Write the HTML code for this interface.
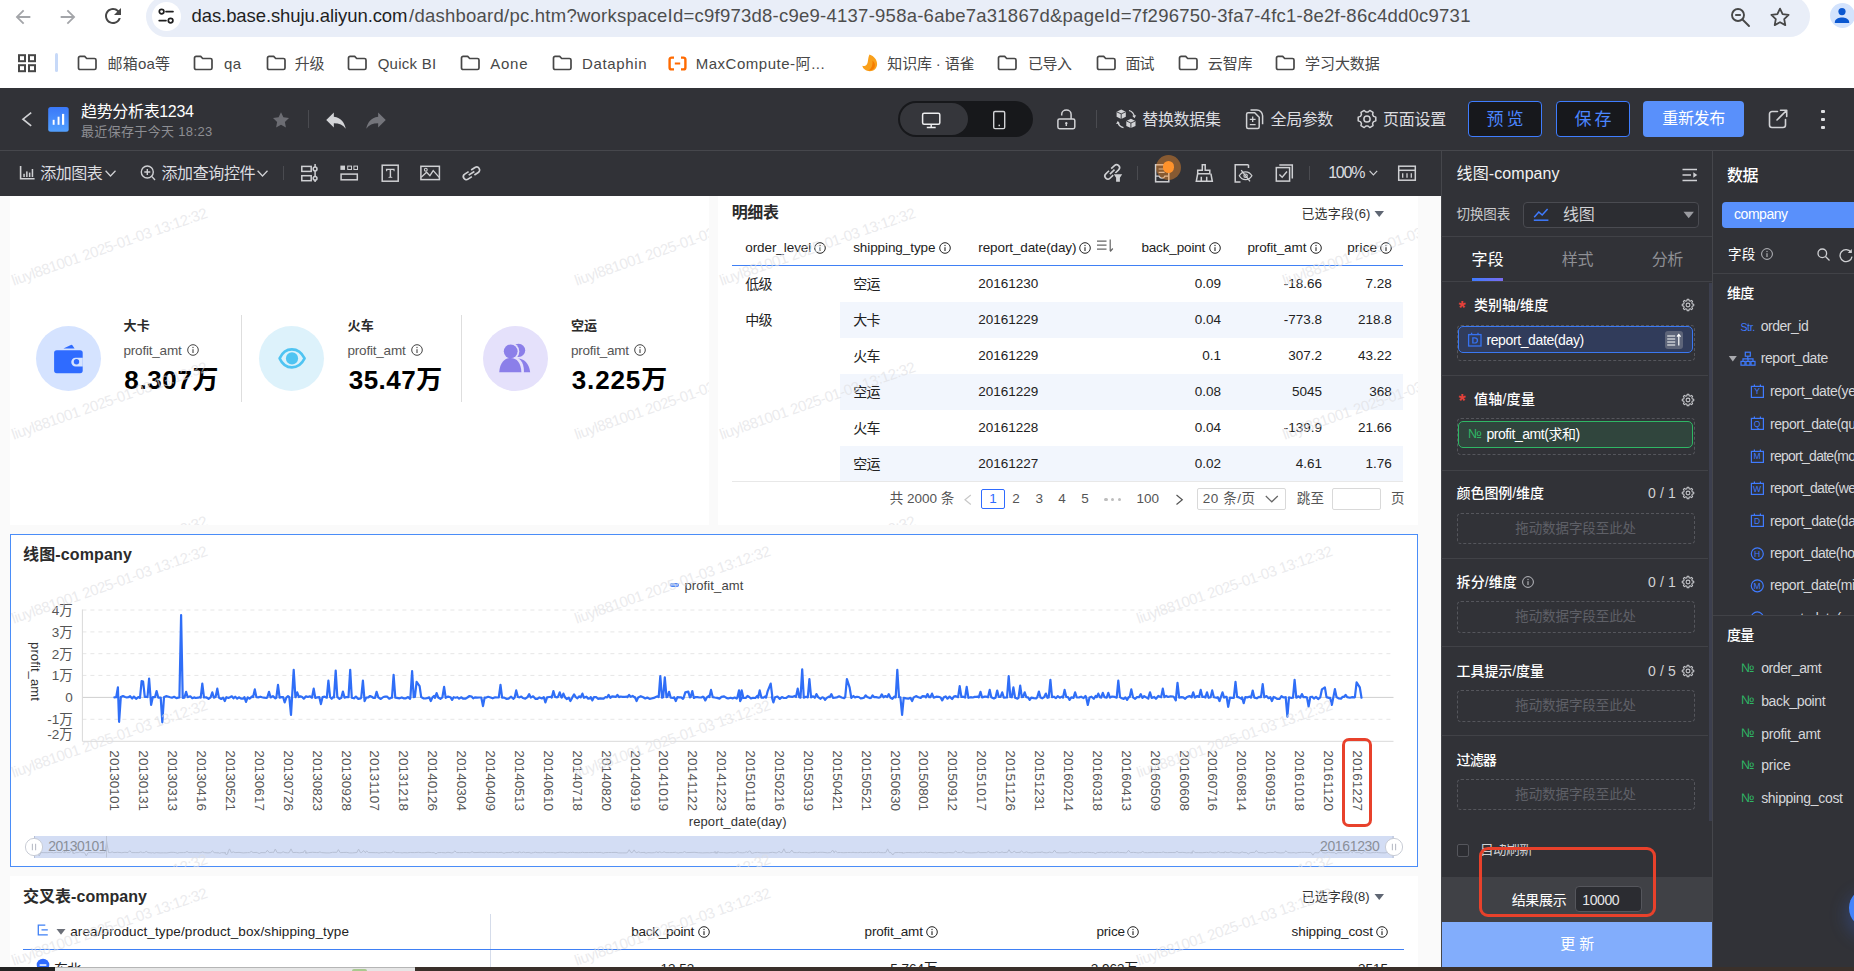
<!DOCTYPE html><html lang="zh"><head><meta charset="utf-8"><title>趋势分析表1234</title><style>
html,body{margin:0;padding:0}
body{width:1854px;height:971px;overflow:hidden;position:relative;background:#fff;font-family:"Liberation Sans","Noto Sans CJK SC",sans-serif;}
div,svg,.t{position:absolute}
svg{overflow:visible}
.t{white-space:nowrap;line-height:1}
.clip{overflow:hidden}

.wm{font-size:15px;color:rgba(222,222,226,0.62);transform:rotate(-19.4deg);transform-origin:0 50%;letter-spacing:-0.43px}

</style></head><body>
<div style="left:0px;top:0px;width:1854px;height:88px;background:#fff"></div>
<div style="left:146px;top:-4px;width:1664px;height:40.5px;background:#e9eef8;border-radius:20.5px"></div>
<div style="left:151.5px;top:1.5px;width:29px;height:29px;background:#fff;border-radius:50%"></div>
<svg style="left:11.5px;top:5.5px;" width="22" height="22" viewBox="0 0 24 24"><path d="M20 11H7.83l5.59-5.59L12 4l-8 8 8 8 1.41-1.41L7.83 13H20v-2z" fill="#a3a5a9"/></svg>
<svg style="left:56.5px;top:5.5px;" width="22" height="22" viewBox="0 0 24 24"><path d="M4 11h12.17l-5.59-5.59L12 4l8 8-8 8-1.41-1.41L16.17 13H4v-2z" fill="#a3a5a9"/></svg>
<svg style="left:100.7px;top:4px;" width="24" height="24" viewBox="0 0 24 24"><path d="M17.65 6.35A7.958 7.958 0 0 0 12 4c-4.42 0-7.99 3.58-7.99 8s3.57 8 7.99 8c3.73 0 6.84-2.55 7.73-6h-2.08A5.99 5.99 0 0 1 12 18c-3.31 0-6-2.69-6-6s2.69-6 6-6c1.66 0 3.14.69 4.22 1.78L13 11h7V4l-2.35 2.35z" fill="#474747"/></svg>
<svg style="left:156px;top:4px;" width="22" height="24" viewBox="0 0 22 24"><g fill="none" stroke="#1f1f1f" stroke-width="1.7" stroke-linecap="round"><circle cx="5.6" cy="7.6" r="2.3"/><path d="M10 7.6H17"/><path d="M3.2 16.6H10"/><circle cx="14.6" cy="16.6" r="2.3"/></g></svg>
<span class="t" style="left:191.50px;top:6.95px;font-size:18.5px;color:#1f1f1f;letter-spacing:-0.085px;">das.base.shuju.aliyun.com</span>
<span class="t" style="left:409.00px;top:6.95px;font-size:18.5px;color:#4d4d4d;letter-spacing:0.245px;">/dashboard/pc.htm?workspaceId=c9f973d8-c9e9-4137-958a-6abe7a31867d&amp;pageId=7f296750-3fa7-4fc1-8e2f-86c4dd0c9731</span>
<svg style="left:1729px;top:6px;" width="22" height="22" viewBox="0 0 22 22"><g fill="none" stroke="#474747" stroke-width="1.9"><circle cx="9" cy="9" r="6"/><path d="M13.5 13.5L20 20" stroke-linecap="round"/><path d="M6.2 9h5.6"/></g></svg>
<svg style="left:1769px;top:5.5px;" width="22" height="22" viewBox="0 0 22 22"><path d="M11 2.6l2.6 5.5 6 .8-4.4 4.2 1.1 6-5.3-2.9-5.3 2.9 1.1-6L2.4 8.9l6-.8z" fill="none" stroke="#474747" stroke-width="1.8" stroke-linejoin="round"/></svg>
<div style="left:1829.5px;top:3px;width:25px;height:25px;background:#d3e3fd;border-radius:50%"></div>
<svg style="left:1832px;top:5px;" width="20" height="20" viewBox="0 0 20 20"><circle cx="10" cy="6.6" r="3.6" fill="#0b57d0"/><path d="M2.8 17.2c0-3.4 4.4-4.7 7.2-4.7s7.2 1.3 7.2 4.7v.8H2.8z" fill="#0b57d0"/></svg>
<svg style="left:17px;top:53px;" width="20" height="20" viewBox="0 0 20 20"><g fill="none" stroke="#474747" stroke-width="2"><rect x="2" y="2.2" width="6" height="6"/><rect x="12" y="2.2" width="6" height="6"/><rect x="2" y="12.2" width="6" height="6"/><rect x="12" y="12.2" width="6" height="6"/></g></svg>
<div style="left:55px;top:53px;width:3px;height:19px;background:#c7d9f8;border-radius:1.5px"></div>
<svg style="left:77px;top:54.8px;" width="20.6" height="16" viewBox="0 0 20.6 16"><path d="M1.5 3 a1.6 1.6 0 0 1 1.6-1.6 h4.6 l2 2.1 h7.7 a1.6 1.6 0 0 1 1.6 1.6 v7.8 a1.6 1.6 0 0 1-1.6 1.6 h-14.3 a1.6 1.6 0 0 1-1.6-1.6 z" fill="none" stroke="#474747" stroke-width="1.7" stroke-linejoin="round"/></svg>
<span class="t" style="left:107.60px;top:55.70px;font-size:15px;color:#474747;letter-spacing:0.178px;">邮箱oa等</span>
<svg style="left:193.4px;top:54.8px;" width="20.6" height="16" viewBox="0 0 20.6 16"><path d="M1.5 3 a1.6 1.6 0 0 1 1.6-1.6 h4.6 l2 2.1 h7.7 a1.6 1.6 0 0 1 1.6 1.6 v7.8 a1.6 1.6 0 0 1-1.6 1.6 h-14.3 a1.6 1.6 0 0 1-1.6-1.6 z" fill="none" stroke="#474747" stroke-width="1.7" stroke-linejoin="round"/></svg>
<span class="t" style="left:224.00px;top:55.70px;font-size:15px;color:#474747;letter-spacing:0.312px;">qa</span>
<svg style="left:265.5px;top:54.8px;" width="20.6" height="16" viewBox="0 0 20.6 16"><path d="M1.5 3 a1.6 1.6 0 0 1 1.6-1.6 h4.6 l2 2.1 h7.7 a1.6 1.6 0 0 1 1.6 1.6 v7.8 a1.6 1.6 0 0 1-1.6 1.6 h-14.3 a1.6 1.6 0 0 1-1.6-1.6 z" fill="none" stroke="#474747" stroke-width="1.7" stroke-linejoin="round"/></svg>
<span class="t" style="left:294.80px;top:55.70px;font-size:15px;color:#474747;letter-spacing:-0.216px;">升级</span>
<svg style="left:347.4px;top:54.8px;" width="20.6" height="16" viewBox="0 0 20.6 16"><path d="M1.5 3 a1.6 1.6 0 0 1 1.6-1.6 h4.6 l2 2.1 h7.7 a1.6 1.6 0 0 1 1.6 1.6 v7.8 a1.6 1.6 0 0 1-1.6 1.6 h-14.3 a1.6 1.6 0 0 1-1.6-1.6 z" fill="none" stroke="#474747" stroke-width="1.7" stroke-linejoin="round"/></svg>
<span class="t" style="left:377.70px;top:55.70px;font-size:15px;color:#474747;letter-spacing:0.259px;">Quick BI</span>
<svg style="left:460px;top:54.8px;" width="20.6" height="16" viewBox="0 0 20.6 16"><path d="M1.5 3 a1.6 1.6 0 0 1 1.6-1.6 h4.6 l2 2.1 h7.7 a1.6 1.6 0 0 1 1.6 1.6 v7.8 a1.6 1.6 0 0 1-1.6 1.6 h-14.3 a1.6 1.6 0 0 1-1.6-1.6 z" fill="none" stroke="#474747" stroke-width="1.7" stroke-linejoin="round"/></svg>
<span class="t" style="left:490.30px;top:55.70px;font-size:15px;color:#474747;letter-spacing:0.718px;">Aone</span>
<svg style="left:551.8px;top:54.8px;" width="20.6" height="16" viewBox="0 0 20.6 16"><path d="M1.5 3 a1.6 1.6 0 0 1 1.6-1.6 h4.6 l2 2.1 h7.7 a1.6 1.6 0 0 1 1.6 1.6 v7.8 a1.6 1.6 0 0 1-1.6 1.6 h-14.3 a1.6 1.6 0 0 1-1.6-1.6 z" fill="none" stroke="#474747" stroke-width="1.7" stroke-linejoin="round"/></svg>
<span class="t" style="left:582.00px;top:55.70px;font-size:15px;color:#474747;letter-spacing:0.650px;">Dataphin</span>
<svg style="left:668px;top:55.5px;" width="19" height="15" viewBox="0 0 19 15"><g fill="none" stroke="#ff6a00" stroke-width="2.4" stroke-linejoin="round"><path d="M6 1.6H3.6a2 2 0 0 0-2 2v7.8a2 2 0 0 0 2 2H6"/><path d="M13 1.6h2.4a2 2 0 0 1 2 2v7.8a2 2 0 0 1-2 2H13"/><path d="M6.8 7.5h5.4" stroke-width="2"/></g></svg>
<span class="t" style="left:695.70px;top:55.70px;font-size:15px;color:#474747;letter-spacing:0.521px;">MaxCompute-阿...</span>
<svg style="left:859px;top:53px;" width="21" height="20" viewBox="0 0 21 20"><path d="M10.5 1.5c4.5 1.5 8 5.5 7.6 10.3-.3 3.8-3.4 6.4-7.2 6.4-4 0-7-2.3-7.6-5.4 1.6.6 3.3.2 4.3-1C9.600 9.400 8.500 5.500 10.500 1.500z" fill="#f9a01b"/><path d="M13.5 7.5c2.5 2 3.300 5 1.700 7.500-1.200 1.900-3.400 2.700-5.800 2.500 3-1.500 4.500-5.500 4.100-10z" fill="#f57c00"/></svg>
<span class="t" style="left:887.30px;top:55.70px;font-size:15px;color:#474747;letter-spacing:-0.149px;">知识库 · 语雀</span>
<svg style="left:997.4px;top:54.8px;" width="20.6" height="16" viewBox="0 0 20.6 16"><path d="M1.5 3 a1.6 1.6 0 0 1 1.6-1.6 h4.6 l2 2.1 h7.7 a1.6 1.6 0 0 1 1.6 1.6 v7.8 a1.6 1.6 0 0 1-1.6 1.6 h-14.3 a1.6 1.6 0 0 1-1.6-1.6 z" fill="none" stroke="#474747" stroke-width="1.7" stroke-linejoin="round"/></svg>
<span class="t" style="left:1028.00px;top:55.70px;font-size:15px;color:#474747;letter-spacing:-0.558px;">已导入</span>
<svg style="left:1095.7px;top:54.8px;" width="20.6" height="16" viewBox="0 0 20.6 16"><path d="M1.5 3 a1.6 1.6 0 0 1 1.6-1.6 h4.6 l2 2.1 h7.7 a1.6 1.6 0 0 1 1.6 1.6 v7.8 a1.6 1.6 0 0 1-1.6 1.6 h-14.3 a1.6 1.6 0 0 1-1.6-1.6 z" fill="none" stroke="#474747" stroke-width="1.7" stroke-linejoin="round"/></svg>
<span class="t" style="left:1125.50px;top:55.70px;font-size:15px;color:#474747;letter-spacing:-1.016px;">面试</span>
<svg style="left:1178px;top:54.8px;" width="20.6" height="16" viewBox="0 0 20.6 16"><path d="M1.5 3 a1.6 1.6 0 0 1 1.6-1.6 h4.6 l2 2.1 h7.7 a1.6 1.6 0 0 1 1.6 1.6 v7.8 a1.6 1.6 0 0 1-1.6 1.6 h-14.3 a1.6 1.6 0 0 1-1.6-1.6 z" fill="none" stroke="#474747" stroke-width="1.7" stroke-linejoin="round"/></svg>
<span class="t" style="left:1207.80px;top:55.70px;font-size:15px;color:#474747;letter-spacing:-0.158px;">云智库</span>
<svg style="left:1275.3px;top:54.8px;" width="20.6" height="16" viewBox="0 0 20.6 16"><path d="M1.5 3 a1.6 1.6 0 0 1 1.6-1.6 h4.6 l2 2.1 h7.7 a1.6 1.6 0 0 1 1.6 1.6 v7.8 a1.6 1.6 0 0 1-1.6 1.6 h-14.3 a1.6 1.6 0 0 1-1.6-1.6 z" fill="none" stroke="#474747" stroke-width="1.7" stroke-linejoin="round"/></svg>
<span class="t" style="left:1305.10px;top:55.70px;font-size:15px;color:#474747;letter-spacing:-0.104px;">学习大数据</span>
<div style="left:0px;top:88px;width:1854px;height:108px;background:#313237"></div>
<div style="left:0px;top:150px;width:1854px;height:1px;background:#46474c"></div>
<svg style="left:20px;top:108px;" width="16" height="22" viewBox="0 0 16 22"><path d="M11.2 4.6L3 11.2l8.200 6.700" fill="none" stroke="#d0d1d4" stroke-width="1.7"/></svg>
<svg style="left:48px;top:107px" width="21" height="25" viewBox="0 0 21 25"><defs><linearGradient id="ag" x1="0" y1="0" x2="0" y2="1"><stop offset="0" stop-color="#3a78f8"/><stop offset="1" stop-color="#52a0ff"/></linearGradient></defs><rect x="0.2" y="0" width="20.5" height="24.8" rx="2.5" fill="url(#ag)"/><rect x="4.7" y="12.8" width="1.9" height="5" fill="#fff"/><rect x="9.6" y="9.700" width="1.9" height="8.100" fill="#fff"/><rect x="14" y="6.900" width="2.2" height="10.900" fill="#fff"/></svg>
<span class="t" style="left:81.00px;top:104.40px;font-size:16px;color:#ffffff;letter-spacing:-0.339px;">趋势分析表1234</span>
<span class="t" style="left:81.00px;top:124.70px;font-size:13px;color:#8d8e93;letter-spacing:0.337px;">最近保存于今天 18:23</span>
<svg style="left:271.8px;top:110.7px;" width="18" height="18" viewBox="0 0 18 18"><path d="M9 1.2l2.400 5.100 5.600 .7-4.100 3.900 1 5.600L9 13.800 4.100 16.500l1-5.600L1 7l5.600-.7z" fill="#6c6d73"/></svg>
<div style="left:308px;top:110.3px;width:1px;height:17.5px;background:#4a4b50"></div>
<svg style="left:323px;top:106.6px;" width="26" height="26" viewBox="0 0 24 24"><path d="M10 9V5l-7 7 7 7v-4.100c5 0 8.500 1.600 11 5.100-1-5-4-10-11-11z" fill="#d4d5d8"/></svg>
<svg style="left:363px;top:106.6px;" width="26" height="26" viewBox="0 0 24 24"><path d="M14 9V5l7 7-7 7v-4.100c-5 0-8.500 1.600-11 5.100 1-5 4-10 11-11z" fill="#74757b"/></svg>
<div style="left:898px;top:101px;width:135.3px;height:35.8px;background:#17181b;border-radius:18px"></div>
<div style="left:900px;top:102.7px;width:68.2px;height:32.3px;background:#35363b;border-radius:16.2px"></div>
<svg style="left:918px;top:108px;" width="26" height="24" viewBox="0 0 26 24"><g fill="none" stroke="#ededef" stroke-width="1.5"><rect x="4.6" y="5.200" width="17.200" height="11" rx="1.5"/><path d="M13.200 16.200V19.200M8.800 19.500H17.700" /></g></svg>
<svg style="left:990px;top:108px;" width="18" height="24" viewBox="0 0 18 24"><g fill="none" stroke="#d2d3d6" stroke-width="1.4"><rect x="3.700" y="3.500" width="11" height="17.100" rx="1.3"/></g><rect x="8.500" y="16.700" width="1.500" height="1.500" fill="#d2d3d6"/></svg>
<svg style="left:1054px;top:106px;" width="24" height="26" viewBox="0 0 24 26"><g fill="none" stroke="#d2d3d6" stroke-width="1.5"><rect x="3.900" y="13" width="16.900" height="9.700" rx="1.600"/><path d="M7.700 9.500V8.200a4.700 4.200 0 0 1 9.400 0V13"/></g><path d="M12.300 16a1.300 1.300 0 0 1 .6 2.400l.2 1.700h-1.600l.2-1.700a1.300 1.300 0 0 1 .6-2.400z" fill="#d2d3d6"/></svg>
<div style="left:1096px;top:110px;width:1px;height:18px;background:#4a4b50"></div>
<svg style="left:1114px;top:107px;" width="24" height="24" viewBox="0 0 24 24"><path d="M2.6 4.800000000000001l4.600-2.200 4.600 2.200v5l-4.600 2.200-4.600-2.200z" fill="#d2d3d6"/><path d="M2.6 4.800000000000001l4.600 2.100 4.600-2.100M7.199999999999999 6.9v5.100" fill="none" stroke="#313237" stroke-width="0.9"/><path d="M12.3 13.899999999999999l4.600-2.200 4.600 2.200v5l-4.600 2.200-4.600-2.200z" fill="#d2d3d6"/><path d="M12.3 13.899999999999999l4.600 2.100 4.600-2.100M16.9 16.0v5.100" fill="none" stroke="#313237" stroke-width="0.9"/><g fill="none" stroke="#d2d3d6" stroke-width="1.300"><path d="M15 3.500a7.500 7.500 0 0 1 5.300 6.500"/><path d="M9.500 20.700a7.500 7.500 0 0 1-5.600-5.700"/></g><path d="M18.200 8.700l2.300 2.500 1.600-3z" fill="#d2d3d6"/><path d="M6 16.500l-2.300-2.600-1.600 3z" fill="#d2d3d6"/></svg>
<span class="t" style="left:1142.20px;top:111.50px;font-size:16px;color:#dcdde0;letter-spacing:-0.304px;">替换数据集</span>
<svg style="left:1243px;top:107px;" width="24" height="24" viewBox="0 0 24 24"><g fill="none" stroke="#d2d3d6" stroke-width="1.500"><path d="M3.600 7.200a1.500 1.500 0 0 1 1.500-1.500h6.600l4.500 4.500v9.800a1.500 1.500 0 0 1-1.500 1.500H5.100a1.500 1.500 0 0 1-1.500-1.500z"/><path d="M7.500 3h6.300a5.800 5.800 0 0 1 5.800 5.800v8.400"/><path d="M6.800 12.300h5.800M9.700 9.500v5.600M6.800 17.700h5.800" stroke-width="1.300"/></g></svg>
<span class="t" style="left:1270.60px;top:111.50px;font-size:16px;color:#dcdde0;letter-spacing:-0.439px;">全局参数</span>
<svg style="left:1355.4px;top:106.9px;" width="24" height="24" viewBox="0 0 24 24"><g fill="none" stroke="#d2d3d6" stroke-width="1.500" stroke-linejoin="round"><path d="M18.60 9.39 L20.80 10.13 L20.80 13.87 L18.60 14.61 L17.56 16.41 L18.02 18.69 L14.78 20.56 L13.04 19.02 L10.96 19.02 L9.22 20.56 L5.98 18.69 L6.44 16.41 L5.40 14.61 L3.20 13.87 L3.20 10.13 L5.40 9.39 L6.44 7.59 L5.98 5.31 L9.22 3.44 L10.96 4.98 L13.04 4.98 L14.78 3.44 L18.02 5.31 L17.56 7.59Z"/><circle cx="12" cy="12" r="3.100"/></g></svg>
<span class="t" style="left:1383.10px;top:111.50px;font-size:16px;color:#dcdde0;letter-spacing:-0.305px;">页面设置</span>
<div style="left:1467.8px;top:101.4px;width:74.2px;height:35.3px;box-sizing:border-box;background:#17181c;border:1.5px solid #3f7dff;border-radius:4px"></div>
<span class="t" style="left:1486.60px;top:110.50px;font-size:17px;color:#4b86ff;letter-spacing:-0.867px;">预 览</span>
<div style="left:1556.3px;top:101.4px;width:73.7px;height:35.3px;box-sizing:border-box;background:#17181c;border:1.5px solid #3f7dff;border-radius:4px"></div>
<span class="t" style="left:1574.50px;top:110.50px;font-size:17px;color:#4b86ff;letter-spacing:-0.867px;">保 存</span>
<div style="left:1643.1px;top:101.4px;width:101.1px;height:35.3px;background:#5990fb;border-radius:4px"></div>
<span class="t" style="left:1662.30px;top:111.20px;font-size:16px;color:#ffffff;letter-spacing:-0.339px;">重新发布</span>
<svg style="left:1766px;top:107px;" width="24" height="24" viewBox="0 0 24 24"><g fill="none" stroke="#d2d3d6" stroke-width="1.600" stroke-linecap="round" stroke-linejoin="round"><path d="M11.500 4.500H6a2.500 2.500 0 0 0-2.500 2.500v11A2.500 2.500 0 0 0 6 20.500h11a2.500 2.500 0 0 0 2.500-2.500v-5.500"/><path d="M11 13L20.500 3.500M14.500 3.300h6.200v6.200"/></g></svg>
<div style="left:1821.4px;top:109.69999999999999px;width:3.8px;height:3.8px;background:#dfe0e3;border-radius:1px"></div>
<div style="left:1821.4px;top:117.69999999999999px;width:3.8px;height:3.8px;background:#dfe0e3;border-radius:1px"></div>
<div style="left:1821.4px;top:125.5px;width:3.8px;height:3.8px;background:#dfe0e3;border-radius:1px"></div>
<svg style="left:19px;top:164px;" width="18" height="18" viewBox="0 0 18 18"><g fill="none" stroke="#cfd0d3" stroke-width="1.6"><path d="M1.600 2V14.800H15.600"/></g><g fill="#cfd0d3"><rect x="4.300" y="9.800" width="1.500" height="3.200"/><rect x="7.100" y="7.400" width="1.500" height="5.600"/><rect x="9.900" y="8.600" width="1.500" height="4.400"/><rect x="12.700" y="5" width="1.500" height="8"/></g></svg>
<span class="t" style="left:40.20px;top:166.00px;font-size:16px;color:#dcdde0;letter-spacing:-0.439px;">添加图表</span>
<svg style="left:104.5px;top:169.5px;" width="12" height="8" viewBox="0 0 12 8"><g fill="none" stroke="#cfd0d3" stroke-width="1.3"><path d="M0.600 0.800L5.500 6l5-5.200"/></g></svg>
<svg style="left:139px;top:164px;" width="18" height="18" viewBox="0 0 18 18"><g fill="none" stroke="#cfd0d3" stroke-width="1.4"><circle cx="8.300" cy="8" r="6"/><path d="M12.700 12.400L16 16M5.300 8h6M8.300 5v6"/></g></svg>
<span class="t" style="left:161.50px;top:166.00px;font-size:16px;color:#dcdde0;letter-spacing:-0.403px;">添加查询控件</span>
<svg style="left:257.3px;top:169.5px;" width="12" height="8" viewBox="0 0 12 8"><g fill="none" stroke="#cfd0d3" stroke-width="1.3"><path d="M0.600 0.800L5.500 6l5-5.200"/></g></svg>
<div style="left:283px;top:166.4px;width:1px;height:13.3px;background:#4a4b50"></div>
<svg style="left:299px;top:162px;" width="20" height="22" viewBox="0 0 20 22"><g fill="none" stroke="#cfd0d3" stroke-width="1.5"><rect x="2.800" y="4.400" width="9.400" height="5"/><rect x="2.800" y="13.700" width="9.400" height="5"/><path d="M16.100 2V5M16.100 9V14.300M16.100 18.300V20"/><circle cx="16.100" cy="7" r="1.900"/><circle cx="16.100" cy="16.300" r="1.900"/></g></svg>
<svg style="left:338px;top:162px;" width="22" height="22" viewBox="0 0 22 22"><rect x="2.400" y="3.600" width="4.600" height="4.300" fill="#cfd0d3"/><g fill="none" stroke="#cfd0d3" stroke-width="1"><rect x="9.700" y="4.100" width="3.800" height="3.400"/><rect x="15.900" y="4.100" width="3.600" height="3.400"/></g><g fill="none" stroke="#cfd0d3" stroke-width="1.5"><rect x="3.100" y="12.100" width="16.200" height="5.700"/></g></svg>
<svg style="left:379px;top:162px;" width="22" height="22" viewBox="0 0 22 22"><g fill="none" stroke="#cfd0d3" stroke-width="1.5"><rect x="3.200" y="3.200" width="16" height="16"/></g><path d="M6.800 6.800h8.800v2.500h-0.900l-0.300-1.200h-2.300v6.600l1.200 0.200v0.900h-3.800v-0.900l1.200-0.200v-6.600h-2.300l-0.300 1.200h-0.900z" fill="#cfd0d3"/></svg>
<svg style="left:418px;top:162px;" width="24" height="22" viewBox="0 0 24 22"><g fill="none" stroke="#cfd0d3" stroke-width="1.5"><rect x="2.900" y="4.300" width="18.500" height="13.300"/><circle cx="7.800" cy="7.700" r="1.400" stroke-width="1.100"/><path d="M3.200 15.200L8.600 10.200l3.300 3.400 3.300-5 6 6.800" stroke-width="1.300"/></g></svg>
<svg style="left:460px;top:162px;" width="22" height="22" viewBox="0 0 22 22"><g transform="translate(11.500,11.300) rotate(-33)" fill="none" stroke="#cfd0d3" stroke-width="1.700"><path d="M-1.5 -3H-6.1a3 3 0 0 0 0 6H-1.5"/><path d="M1.5 -3H6.1a3 3 0 0 1 0 6H1.5"/><path d="M-3.4 0H3.4"/></g></svg>
<svg style="left:1102px;top:162px;" width="22" height="22" viewBox="0 0 22 22"><g transform="translate(10.200,9.900) rotate(-44)" fill="none" stroke="#cfd0d3" stroke-width="1.600"><path d="M-1.5 -3H-6a3 3 0 0 0 0 6H-1.5"/><path d="M1.5 -3H6a3 3 0 0 1 0 6H1.5"/><path d="M-3.2 0H3.2"/></g><path d="M10.800 11.500h10.400l-3 5v4h-4.400v-4z" fill="#313237"/><path d="M11.800 12.200h8.400l-2.300 3.600v3.900h-3.800v-3.900z" fill="#cfd0d3"/></svg>
<div style="left:1137px;top:166.2px;width:1px;height:13.5px;background:#4a4b50"></div>
<svg style="left:1153px;top:162px;" width="20" height="22" viewBox="0 0 20 22"><g fill="none" stroke="#cfd0d3" stroke-width="1.5"><rect x="2.600" y="2.800" width="13.200" height="17"/><path d="M5.600 7h6M5.600 10.300h6" stroke-width="1.200"/><path d="M2.800 14.200h3.400c.8 2.600 4.600 2.600 5.600 0h3.800" stroke-width="1.300"/></g></svg>
<div style="left:1155.9px;top:154.8px;width:25px;height:25px;background:rgba(255,146,43,0.42);border-radius:50%"></div>
<div style="left:1162.5px;top:161.4px;width:11.8px;height:11.8px;background:#ff922b;border-radius:50%"></div>
<svg style="left:1193px;top:162px;" width="22" height="22" viewBox="0 0 22 22"><g fill="none" stroke="#cfd0d3" stroke-width="1.5"><path d="M9.300 2.800h2.900v5.400h4.600v3.500H4.700V8.200h4.600z"/><path d="M4.700 11.700L3.300 19.300h16l-1.400-7.600M8.300 19.300v-4.600M13.700 19.300v-4.600"/></g></svg>
<svg style="left:1232px;top:162px;" width="22" height="22" viewBox="0 0 22 22"><g fill="none" stroke="#cfd0d3" stroke-width="1.5"><path d="M16.500 2.800H3.200v17.200h5.300M16.500 2.800v3.200"/><path d="M7.300 13.700c3-5.200 9.600-5.200 12.600 0-3 5.200-9.600 5.200-12.600 0z" stroke-width="1.300"/><circle cx="13.600" cy="13.700" r="1.700" stroke-width="1.200"/><path d="M9.200 8.200L18 19.300" stroke-width="1.300"/></g></svg>
<svg style="left:1273px;top:162px;" width="22" height="22" viewBox="0 0 22 22"><g fill="none" stroke="#cfd0d3" stroke-width="1.5"><rect x="3.300" y="5.600" width="13.300" height="13.500"/><path d="M6.300 3h13v13.400" /><path d="M6.400 12.500l2.800 2.800 4.800-5.800" stroke-width="1.400"/></g></svg>
<div style="left:1309px;top:166.2px;width:1px;height:13.5px;background:#4a4b50"></div>
<span class="t" style="left:1328.20px;top:164.60px;font-size:16px;color:#dcdde0;letter-spacing:-1.241px;">100%</span>
<svg style="left:1369.3px;top:169.7px;" width="10" height="7" viewBox="0 0 10 7"><g fill="none" stroke="#cfd0d3" stroke-width="1.2"><path d="M0.600 0.800L4.400 4.800l3.800-4"/></g></svg>
<svg style="left:1396px;top:162px;" width="22" height="22" viewBox="0 0 22 22"><g fill="none" stroke="#cfd0d3" stroke-width="1.5"><rect x="2.700" y="4.200" width="16.600" height="14"/><path d="M2.700 8.300h16.600"/><path d="M6.700 11.300v4.500M11 11.300v4.500M15.300 11.300v4.500" stroke-width="1.300"/></g></svg>
<div style="left:0px;top:196px;width:1441px;height:775px;background:#fafafa"></div>
<div style="left:10px;top:196px;width:699px;height:329px;background:#fff"></div>
<div style="left:718px;top:196px;width:700px;height:329px;background:#fff"></div>
<div style="left:10px;top:534px;width:1408px;height:333px;background:#fff;box-sizing:border-box;border:1px solid #4a8df8"></div>
<div style="left:10px;top:876px;width:1408px;height:100px;background:#fff"></div>
<div style="left:35.5px;top:325.8px;width:65px;height:65px;background:#d5e3ff;border-radius:50%"></div>
<svg style="left:50px;top:342px;" width="36" height="34" viewBox="0 0 36 34"><path d="M13.400 6.400L20.900 2.900a1.200 1.200 0 0 1 1.500 .4l2.200 3.100z" fill="#2f6bff"/><rect x="4.100" y="8.200" width="28.600" height="23" rx="2.600" fill="#2f6bff"/><path d="M25.600 15.700h7.200v8.700h-7.200a4.350 4.350 0 0 1 0-8.700z" fill="#d5e3ff"/><circle cx="26.500" cy="19.800" r="2.700" fill="#2f6bff"/></svg>
<span class="t" style="left:123.50px;top:319.20px;font-size:13px;color:#2b2b2b;letter-spacing:0.284px;font-weight:700;">大卡</span>
<span class="t" style="left:123.50px;top:343.55px;font-size:13.5px;color:#555;letter-spacing:-0.203px;">profit_amt</span>
<svg style="left:186px;top:343.2px;" width="14" height="14" viewBox="0 0 14 14"><circle cx="7" cy="7" r="5.3" fill="none" stroke="#444" stroke-width="1"/><rect x="6.45" y="6.200" width="1.100" height="3.800" fill="#444"/><rect x="6.45" y="3.900" width="1.100" height="1.200" fill="#444"/></svg>
<span class="t" style="left:124.30px;top:367.00px;font-size:26px;color:#000;letter-spacing:0.644px;font-weight:700;">8.307万</span>
<div style="left:241px;top:315.4px;width:1.3px;height:86.6px;background:#dedede"></div>
<div style="left:259px;top:325.8px;width:65px;height:65px;background:#ddf2fb;border-radius:50%"></div>
<svg style="left:276px;top:346px;" width="32" height="26" viewBox="0 0 32 26"><path d="M3.600 12.400C9 0.400 22.600 0.400 28.600 12.400 22.600 24.400 9 24.400 3.600 12.400z" fill="none" stroke="#4fc4f2" stroke-width="2.600" stroke-linejoin="round"/><circle cx="16" cy="12.400" r="6.100" fill="#4fc4f2"/></svg>
<span class="t" style="left:347.50px;top:319.20px;font-size:13px;color:#2b2b2b;letter-spacing:0.184px;font-weight:700;">火车</span>
<span class="t" style="left:347.50px;top:343.55px;font-size:13.5px;color:#555;letter-spacing:-0.203px;">profit_amt</span>
<svg style="left:409.8px;top:343.2px;" width="14" height="14" viewBox="0 0 14 14"><circle cx="7" cy="7" r="5.3" fill="none" stroke="#444" stroke-width="1"/><rect x="6.45" y="6.200" width="1.100" height="3.800" fill="#444"/><rect x="6.45" y="3.900" width="1.100" height="1.200" fill="#444"/></svg>
<span class="t" style="left:348.70px;top:367.00px;font-size:26px;color:#000;letter-spacing:0.504px;font-weight:700;">35.47万</span>
<div style="left:460.5px;top:315.4px;width:1.3px;height:86.6px;background:#dedede"></div>
<div style="left:483px;top:325.8px;width:65px;height:65px;background:#e5e1fb;border-radius:50%"></div>
<svg style="left:497px;top:341px;" width="36" height="34" viewBox="0 0 36 34"><circle cx="21.600" cy="9.300" r="6.600" fill="#8b7fe9"/><path d="M21 17.500c6 .3 11 4.600 12.200 13.700H21z" fill="#8b7fe9"/><circle cx="13.600" cy="10.400" r="8.700" fill="#e5e1fb"/><path d="M0 32.700c0-13 6-17.500 14.400-17.500 8.400 0 13.400 6.500 12.400 17.500z" fill="#e5e1fb"/><circle cx="13.700" cy="10.300" r="6.900" fill="#8b7fe9"/><path d="M2.200 31.200c.8-9.800 5.300-14.200 11.500-14.200 6.200 0 10.400 5.200 10.700 14.200z" fill="#8b7fe9"/></svg>
<span class="t" style="left:570.90px;top:319.20px;font-size:13px;color:#2b2b2b;letter-spacing:0.184px;font-weight:700;">空运</span>
<span class="t" style="left:570.90px;top:343.55px;font-size:13.5px;color:#555;letter-spacing:-0.203px;">profit_amt</span>
<svg style="left:633.2px;top:343.2px;" width="14" height="14" viewBox="0 0 14 14"><circle cx="7" cy="7" r="5.3" fill="none" stroke="#444" stroke-width="1"/><rect x="6.45" y="6.200" width="1.100" height="3.800" fill="#444"/><rect x="6.45" y="3.900" width="1.100" height="1.200" fill="#444"/></svg>
<span class="t" style="left:571.70px;top:367.00px;font-size:26px;color:#000;letter-spacing:0.884px;font-weight:700;">3.225万</span>
<span class="t" style="left:731.70px;top:205.00px;font-size:16px;color:#2b2b2b;letter-spacing:-0.358px;font-weight:700;">明细表</span>
<span class="t" style="left:1301.40px;top:206.80px;font-size:13px;color:#333;letter-spacing:0.185px;">已选字段(6)</span>
<svg style="left:1374px;top:209.5px;" width="11" height="8" viewBox="0 0 11 8"><path d="M0.500 1h9.500L5.250 7z" fill="#5f6673"/></svg>
<span class="t" style="left:745.20px;top:241.05px;font-size:13.5px;color:#222;letter-spacing:-0.070px;">order_level</span>
<svg style="left:812.8px;top:240.8px;" width="14" height="14" viewBox="0 0 14 14"><circle cx="7" cy="7" r="5.3" fill="none" stroke="#222" stroke-width="1"/><rect x="6.45" y="6.200" width="1.100" height="3.800" fill="#222"/><rect x="6.45" y="3.900" width="1.100" height="1.200" fill="#222"/></svg>
<span class="t" style="left:853.20px;top:241.05px;font-size:13.5px;color:#222;letter-spacing:-0.086px;">shipping_type</span>
<svg style="left:937.8px;top:240.8px;" width="14" height="14" viewBox="0 0 14 14"><circle cx="7" cy="7" r="5.3" fill="none" stroke="#222" stroke-width="1"/><rect x="6.45" y="6.200" width="1.100" height="3.800" fill="#222"/><rect x="6.45" y="3.900" width="1.100" height="1.200" fill="#222"/></svg>
<span class="t" style="left:978.30px;top:241.05px;font-size:13.5px;color:#222;letter-spacing:-0.107px;">report_date(day)</span>
<svg style="left:1078px;top:240.8px;" width="14" height="14" viewBox="0 0 14 14"><circle cx="7" cy="7" r="5.3" fill="none" stroke="#222" stroke-width="1"/><rect x="6.45" y="6.200" width="1.100" height="3.800" fill="#222"/><rect x="6.45" y="3.900" width="1.100" height="1.200" fill="#222"/></svg>
<span class="t" style="left:1141.40px;top:241.05px;font-size:13.5px;color:#222;letter-spacing:-0.146px;">back_point</span>
<svg style="left:1207.7px;top:240.8px;" width="14" height="14" viewBox="0 0 14 14"><circle cx="7" cy="7" r="5.3" fill="none" stroke="#222" stroke-width="1"/><rect x="6.45" y="6.200" width="1.100" height="3.800" fill="#222"/><rect x="6.45" y="3.900" width="1.100" height="1.200" fill="#222"/></svg>
<span class="t" style="left:1247.40px;top:241.05px;font-size:13.5px;color:#222;letter-spacing:-0.115px;">profit_amt</span>
<svg style="left:1308.7px;top:240.8px;" width="14" height="14" viewBox="0 0 14 14"><circle cx="7" cy="7" r="5.3" fill="none" stroke="#222" stroke-width="1"/><rect x="6.45" y="6.200" width="1.100" height="3.800" fill="#222"/><rect x="6.45" y="3.900" width="1.100" height="1.200" fill="#222"/></svg>
<span class="t" style="left:1347.20px;top:241.05px;font-size:13.5px;color:#222;letter-spacing:0.159px;">price</span>
<svg style="left:1378.6px;top:240.8px;" width="14" height="14" viewBox="0 0 14 14"><circle cx="7" cy="7" r="5.3" fill="none" stroke="#222" stroke-width="1"/><rect x="6.45" y="6.200" width="1.100" height="3.800" fill="#222"/><rect x="6.45" y="3.900" width="1.100" height="1.200" fill="#222"/></svg>
<svg style="left:1096px;top:238px;" width="18" height="16" viewBox="0 0 18 16"><g fill="none" stroke="#666" stroke-width="1.200"><path d="M1 3.200h9.500M1 7.200h9.500M1 11.200h9.500M14.200 1.500v11.500M14.200 13.500l2.600-3"/></g></svg>
<div style="left:839.6px;top:302px;width:563.1px;height:36px;background:#f2f6fd"></div>
<div style="left:839.6px;top:374px;width:563.1px;height:36px;background:#f2f6fd"></div>
<div style="left:839.6px;top:446px;width:563.1px;height:36px;background:#f2f6fd"></div>
<div style="left:731.7px;top:265.2px;width:671px;height:1.3px;background:#3f80f5"></div>
<span class="t" style="left:745.20px;top:277.20px;font-size:14px;color:#222;letter-spacing:-0.800px;">低级</span>
<span class="t" style="left:853.20px;top:277.20px;font-size:14px;color:#222;letter-spacing:-0.800px;">空运</span>
<span class="t" style="left:978.30px;top:277.45px;font-size:13.5px;color:#222;letter-spacing:0.003px;">20161230</span>
<span class="t" style="left:1194.72px;top:277.45px;font-size:13.5px;color:#222;">0.09</span>
<span class="t" style="left:1283.72px;top:277.45px;font-size:13.5px;color:#222;">-18.66</span>
<span class="t" style="left:1365.52px;top:277.45px;font-size:13.5px;color:#222;">7.28</span>
<span class="t" style="left:745.20px;top:313.20px;font-size:14px;color:#222;letter-spacing:-0.800px;">中级</span>
<span class="t" style="left:853.20px;top:313.20px;font-size:14px;color:#222;letter-spacing:-0.800px;">大卡</span>
<span class="t" style="left:978.30px;top:313.45px;font-size:13.5px;color:#222;letter-spacing:0.003px;">20161229</span>
<span class="t" style="left:1194.72px;top:313.45px;font-size:13.5px;color:#222;">0.04</span>
<span class="t" style="left:1283.72px;top:313.45px;font-size:13.5px;color:#222;">-773.8</span>
<span class="t" style="left:1358.00px;top:313.45px;font-size:13.5px;color:#222;">218.8</span>
<span class="t" style="left:853.20px;top:349.20px;font-size:14px;color:#222;letter-spacing:-0.800px;">火车</span>
<span class="t" style="left:978.30px;top:349.45px;font-size:13.5px;color:#222;letter-spacing:0.003px;">20161229</span>
<span class="t" style="left:1202.22px;top:349.45px;font-size:13.5px;color:#222;">0.1</span>
<span class="t" style="left:1288.20px;top:349.45px;font-size:13.5px;color:#222;">307.2</span>
<span class="t" style="left:1358.00px;top:349.45px;font-size:13.5px;color:#222;">43.22</span>
<span class="t" style="left:853.20px;top:385.20px;font-size:14px;color:#222;letter-spacing:-0.800px;">空运</span>
<span class="t" style="left:978.30px;top:385.45px;font-size:13.5px;color:#222;letter-spacing:0.003px;">20161229</span>
<span class="t" style="left:1194.72px;top:385.45px;font-size:13.5px;color:#222;">0.08</span>
<span class="t" style="left:1291.95px;top:385.45px;font-size:13.5px;color:#222;">5045</span>
<span class="t" style="left:1369.27px;top:385.45px;font-size:13.5px;color:#222;">368</span>
<span class="t" style="left:853.20px;top:421.20px;font-size:14px;color:#222;letter-spacing:-0.800px;">火车</span>
<span class="t" style="left:978.30px;top:421.45px;font-size:13.5px;color:#222;letter-spacing:0.003px;">20161228</span>
<span class="t" style="left:1194.72px;top:421.45px;font-size:13.5px;color:#222;">0.04</span>
<span class="t" style="left:1283.72px;top:421.45px;font-size:13.5px;color:#222;">-139.9</span>
<span class="t" style="left:1358.00px;top:421.45px;font-size:13.5px;color:#222;">21.66</span>
<span class="t" style="left:853.20px;top:457.20px;font-size:14px;color:#222;letter-spacing:-0.800px;">空运</span>
<span class="t" style="left:978.30px;top:457.45px;font-size:13.5px;color:#222;letter-spacing:0.003px;">20161227</span>
<span class="t" style="left:1194.72px;top:457.45px;font-size:13.5px;color:#222;">0.02</span>
<span class="t" style="left:1295.72px;top:457.45px;font-size:13.5px;color:#222;">4.61</span>
<span class="t" style="left:1365.52px;top:457.45px;font-size:13.5px;color:#222;">1.76</span>
<div style="left:731.7px;top:481px;width:671px;height:1px;background:#e8e8e8"></div>
<span class="t" style="left:889.70px;top:492.25px;font-size:13.5px;color:#555;letter-spacing:-0.007px;">共 2000 条</span>
<svg style="left:963px;top:493.5px;" width="10" height="12" viewBox="0 0 10 12"><path d="M7.800 1L2 5.700l5.800 4.800" fill="none" stroke="#c8c8c8" stroke-width="1.200"/></svg>
<div style="left:981.4px;top:489.4px;width:23.3px;height:19.4px;box-sizing:border-box;border:1px solid #2f6bff;border-radius:2px;background:#fff"></div>
<span class="t" style="left:989.24px;top:492.25px;font-size:13.5px;color:#2f6bff;">1</span>
<span class="t" style="left:1012.34px;top:492.25px;font-size:13.5px;color:#555;">2</span>
<span class="t" style="left:1035.44px;top:492.25px;font-size:13.5px;color:#555;">3</span>
<span class="t" style="left:1058.34px;top:492.25px;font-size:13.5px;color:#555;">4</span>
<span class="t" style="left:1081.24px;top:492.25px;font-size:13.5px;color:#555;">5</span>
<div style="left:1104.4px;top:497.6px;width:3.2px;height:3.2px;background:#bdbdbd;border-radius:50%"></div>
<div style="left:1111.2px;top:497.6px;width:3.2px;height:3.2px;background:#bdbdbd;border-radius:50%"></div>
<div style="left:1118.0px;top:497.6px;width:3.2px;height:3.2px;background:#bdbdbd;border-radius:50%"></div>
<span class="t" style="left:1136.43px;top:492.25px;font-size:13.5px;color:#555;">100</span>
<svg style="left:1174.5px;top:493.5px;" width="10" height="12" viewBox="0 0 10 12"><path d="M1.500 1l5.800 4.700L1.500 10.500" fill="none" stroke="#555" stroke-width="1.200"/></svg>
<div style="left:1196.5px;top:488.2px;width:89.7px;height:21.4px;box-sizing:border-box;border:1px solid #d9d9d9;border-radius:2px;background:#fff"></div>
<span class="t" style="left:1202.70px;top:492.25px;font-size:13.5px;color:#555;letter-spacing:0.574px;">20 条/页</span>
<svg style="left:1265px;top:494.5px;" width="14" height="9" viewBox="0 0 14 9"><path d="M0.800 1l6 5.800 6-5.800" fill="none" stroke="#666" stroke-width="1.200"/></svg>
<span class="t" style="left:1296.70px;top:492.25px;font-size:13.5px;color:#555;letter-spacing:0.200px;">跳至</span>
<div style="left:1332.4px;top:488.2px;width:49px;height:21.4px;box-sizing:border-box;border:1px solid #d9d9d9;border-radius:2px;background:#fff"></div>
<span class="t" style="left:1391.00px;top:492.25px;font-size:13.5px;color:#555;">页</span>
<span class="t" style="left:23.00px;top:547.20px;font-size:16px;color:#2b2b2b;letter-spacing:0.136px;font-weight:700;">线图-company</span>
<div style="left:670.3px;top:583.3px;width:8.6px;height:3.4px;background:#8fb3fb;border:0.600px solid #4a83f7;box-sizing:border-box;border-radius:1.500px"></div>
<span class="t" style="left:684.50px;top:578.90px;font-size:13px;color:#444;letter-spacing:0.110px;">profit_amt</span>
<span class="t" style="left:51.68px;top:603.85px;font-size:13.5px;color:#555;">4万</span>
<span class="t" style="left:51.68px;top:625.75px;font-size:13.5px;color:#555;">3万</span>
<span class="t" style="left:51.68px;top:647.55px;font-size:13.5px;color:#555;">2万</span>
<span class="t" style="left:51.68px;top:669.25px;font-size:13.5px;color:#555;">1万</span>
<span class="t" style="left:65.18px;top:691.25px;font-size:13.5px;color:#555;">0</span>
<span class="t" style="left:47.18px;top:712.55px;font-size:13.5px;color:#555;">-1万</span>
<span class="t" style="left:47.18px;top:728.05px;font-size:13.5px;color:#555;">-2万</span>
<span class="t" style="left:5.80px;top:665.30px;font-size:13px;color:#333;letter-spacing:0.110px;transform:rotate(90deg);">profit_amt</span>
<svg style="left:0px;top:0px;" width="1441" height="971" viewBox="0 0 1441 971"><path d="M82.400 610H1393.500" stroke="#e6e6e6" stroke-width="1" stroke-dasharray="4 4"/><path d="M82.400 631.9H1393.500" stroke="#e6e6e6" stroke-width="1" stroke-dasharray="4 4"/><path d="M82.400 653.7H1393.500" stroke="#e6e6e6" stroke-width="1" stroke-dasharray="4 4"/><path d="M82.400 675.4H1393.500" stroke="#e6e6e6" stroke-width="1" stroke-dasharray="4 4"/><path d="M82.400 719.3H1393.500" stroke="#e6e6e6" stroke-width="1" stroke-dasharray="4 4"/><path d="M82.400 697.4H1393.500" stroke="#cfcfcf" stroke-width="1"/><path d="M82.400 609.500V741.300H1393.500" fill="none" stroke="#d9d9d9" stroke-width="1"/><path d="M114.4 697.4 L116.2 697.2 L117.9 687.4 L119.1 721.8 L120.8 697.1 L123.0 696.1 L125.2 697.0 L126.8 697.5 L128.5 697.2 L130.1 696.2 L132.2 698.5 L133.9 696.6 L136.1 698.8 L138.3 697.1 L140.0 697.9 L141.6 681.1 L143.1 681.6 L144.8 696.9 L147.2 696.8 L147.5 697.0 L149.1 678.6 L151.1 704.9 L152.8 697.0 L155.0 697.2 L156.6 691.1 L158.3 697.7 L160.0 697.7 L160.7 697.5 L162.3 722.3 L164.0 697.3 L166.1 696.1 L167.8 696.5 L170.1 697.2 L172.0 697.7 L174.1 696.8 L176.4 698.1 L178.3 697.7 L179.4 697.4 L181.1 615.0 L182.7 697.8 L184.4 697.6 L186.1 691.9 L187.7 697.2 L190.3 696.3 L192.3 698.2 L194.1 697.4 L195.7 698.0 L198.1 697.7 L200.6 696.9 L200.7 697.6 L202.3 683.6 L204.0 697.5 L206.1 697.3 L208.6 698.8 L210.6 697.4 L212.3 692.4 L213.9 697.6 L215.6 697.0 L217.3 688.6 L218.9 697.6 L221.2 699.0 L223.1 697.7 L224.8 701.1 L226.4 697.2 L228.4 698.0 L230.0 697.3 L231.8 696.3 L233.5 698.3 L235.2 696.7 L237.2 698.6 L238.9 697.3 L241.0 698.6 L243.4 698.6 L244.4 697.2 L246.0 701.9 L247.7 697.3 L249.6 698.6 L252.2 696.4 L253.1 697.1 L254.8 689.4 L256.4 697.1 L258.2 697.4 L260.4 696.7 L262.0 697.2 L264.0 697.7 L266.6 698.0 L267.3 697.4 L269.0 691.9 L270.6 697.5 L272.9 696.1 L275.4 698.3 L276.3 697.8 L278.0 684.9 L279.6 697.7 L281.6 697.1 L283.1 697.0 L284.7 702.4 L286.4 697.5 L288.0 696.1 L289.3 697.1 L291.0 714.9 L293.7 669.9 L295.4 697.1 L295.6 697.2 L297.2 692.4 L298.9 697.0 L300.5 696.4 L302.2 697.0 L303.8 698.6 L306.0 696.4 L307.9 697.0 L309.8 696.3 L312.0 697.7 L313.7 688.6 L315.3 697.9 L317.4 697.4 L319.3 697.0 L320.9 704.1 L322.6 697.0 L324.5 696.7 L326.8 697.7 L328.4 680.6 L330.1 697.1 L331.7 698.8 L333.8 696.4 L334.0 697.4 L335.7 670.6 L337.3 696.9 L339.5 698.9 L341.3 697.8 L342.9 691.6 L344.6 697.6 L346.4 697.0 L348.5 697.1 L350.2 669.9 L351.8 697.7 L353.9 698.3 L355.9 696.6 L358.3 699.0 L360.7 698.4 L361.2 697.7 L362.9 680.6 L364.6 701.1 L366.3 697.6 L368.1 697.5 L370.1 696.0 L371.7 696.8 L373.6 698.0 L375.0 697.9 L376.6 691.9 L378.3 697.3 L380.8 699.0 L383.4 697.0 L385.2 696.6 L387.0 696.5 L389.2 698.7 L391.7 697.4 L392.0 697.6 L393.6 674.9 L395.3 697.7 L397.0 697.9 L399.5 698.3 L401.8 697.4 L403.6 698.3 L405.5 698.4 L408.1 697.1 L410.1 698.8 L410.4 697.6 L412.1 671.1 L413.7 697.1 L414.9 697.0 L416.6 681.9 L419.6 686.1 L421.2 697.1 L423.7 698.4 L425.5 698.5 L428.1 697.9 L429.2 697.3 L430.8 701.1 L432.5 697.4 L434.2 695.9 L434.9 697.9 L436.6 693.1 L438.2 697.5 L440.4 698.8 L442.4 697.3 L444.1 686.9 L445.7 697.8 L448.1 696.6 L450.4 697.2 L452.1 699.9 L453.7 697.2 L455.5 697.7 L457.4 697.2 L459.1 698.7 L461.1 697.3 L463.3 698.7 L465.3 698.7 L467.4 697.5 L469.5 696.0 L471.6 696.5 L473.2 698.4 L474.9 697.4 L477.3 697.6 L479.2 697.5 L481.3 697.5 L483.0 706.1 L484.6 697.7 L486.3 697.6 L488.2 696.8 L490.6 697.5 L492.7 698.3 L495.2 697.3 L497.5 697.5 L498.8 697.4 L500.5 684.9 L502.1 697.6 L504.2 697.6 L506.3 698.8 L508.6 698.6 L511.1 696.7 L513.3 698.8 L514.6 697.7 L516.2 690.4 L517.9 697.0 L519.6 697.3 L521.3 696.6 L522.9 698.0 L525.3 698.7 L527.5 697.1 L529.2 694.1 L530.8 697.6 L533.1 696.3 L535.6 698.9 L537.4 698.9 L539.4 697.4 L542.0 698.5 L543.8 697.1 L545.4 702.4 L547.1 697.3 L549.2 697.0 L551.0 696.9 L551.8 697.6 L553.4 691.1 L555.1 696.9 L557.2 697.3 L558.0 696.9 L559.7 692.4 L561.3 697.2 L561.8 697.5 L563.4 693.6 L565.1 697.4 L566.7 699.0 L568.8 697.7 L570.4 701.1 L572.1 697.9 L572.5 697.0 L574.1 694.4 L575.8 697.2 L577.4 698.3 L579.3 696.3 L580.7 697.3 L582.4 693.6 L584.0 697.8 L586.5 696.7 L588.2 698.7 L590.4 698.1 L590.7 697.0 L592.4 700.4 L594.0 697.0 L596.3 697.2 L598.0 698.8 L600.2 698.4 L601.9 698.6 L603.6 698.6 L605.6 697.0 L607.0 697.5 L608.6 694.9 L610.3 697.8 L612.1 696.3 L614.3 696.6 L615.7 697.0 L617.4 694.9 L619.0 697.1 L620.7 696.5 L622.6 696.8 L624.9 696.8 L627.0 696.5 L627.4 697.2 L629.1 694.9 L630.7 696.9 L632.6 695.9 L634.9 697.6 L634.9 697.1 L636.6 701.1 L638.2 697.4 L640.8 696.2 L643.2 697.2 L645.3 698.5 L647.3 697.5 L649.6 698.9 L651.5 698.5 L653.8 697.9 L655.8 697.0 L657.5 696.3 L658.7 697.0 L660.3 676.1 L662.0 697.6 L663.2 697.2 L664.8 677.4 L666.5 697.1 L667.4 697.0 L669.1 691.9 L670.7 697.7 L673.2 698.0 L674.1 697.2 L675.8 701.1 L677.4 697.1 L679.3 697.3 L681.1 697.3 L683.0 698.9 L683.6 697.9 L685.3 692.4 L688.3 691.6 L689.9 697.4 L690.6 697.1 L692.3 691.1 L693.9 697.9 L695.8 697.0 L697.4 697.1 L699.5 697.5 L701.3 697.5 L702.9 696.7 L703.6 697.0 L705.3 700.4 L706.9 697.3 L708.6 696.0 L709.4 697.2 L711.0 689.9 L712.7 697.1 L714.8 697.5 L717.2 697.9 L719.5 698.6 L721.5 696.9 L724.1 696.4 L726.4 697.9 L728.1 698.5 L730.5 697.8 L732.9 698.4 L734.6 697.5 L736.7 698.5 L737.3 697.7 L739.0 690.4 L740.2 701.1 L741.9 697.7 L740.1 697.5 L741.7 690.4 L743.4 697.8 L745.7 698.0 L747.5 696.0 L749.2 697.0 L750.9 698.5 L753.1 697.8 L755.3 698.0 L757.4 695.9 L758.1 697.7 L759.7 690.4 L761.4 697.6 L763.5 697.6 L765.7 696.1 L766.1 697.6 L767.7 691.1 L770.7 683.6 L772.4 697.2 L771.8 697.0 L773.4 702.4 L775.1 697.2 L777.4 696.5 L779.8 698.9 L781.9 697.1 L783.9 698.0 L786.3 697.8 L788.6 696.1 L790.3 696.7 L792.6 696.8 L794.8 695.9 L796.0 697.0 L797.7 688.6 L799.3 697.2 L800.5 697.6 L802.2 669.4 L803.8 697.6 L806.1 696.8 L807.8 697.4 L809.4 679.1 L811.1 697.4 L813.1 696.3 L814.8 697.8 L816.4 694.1 L818.1 697.1 L820.6 698.8 L822.3 697.3 L823.5 697.7 L825.1 699.9 L826.8 697.9 L828.8 696.7 L829.7 697.1 L831.4 694.1 L833.0 697.8 L834.9 697.7 L836.6 697.5 L839.1 696.3 L841.6 697.5 L844.1 698.1 L845.2 697.1 L846.9 679.1 L849.6 687.4 L851.3 697.8 L853.4 696.0 L855.0 697.4 L857.0 696.8 L858.8 697.0 L860.7 698.5 L862.3 698.2 L864.0 697.7 L865.6 695.4 L867.3 697.0 L869.8 698.1 L871.0 697.8 L872.6 695.4 L874.3 697.2 L876.2 697.1 L878.8 697.7 L880.2 697.3 L881.8 694.4 L883.5 697.3 L885.4 696.0 L887.2 697.0 L888.8 694.1 L890.5 697.7 L892.4 698.8 L894.2 696.7 L895.7 697.4 L897.3 669.9 L899.0 697.1 L900.4 697.3 L902.1 714.9 L903.7 697.9 L906.2 698.4 L908.4 698.7 L910.4 697.8 L912.1 701.1 L913.7 697.4 L916.0 696.1 L918.4 697.3 L920.7 697.9 L922.6 696.1 L925.1 696.3 L925.9 697.4 L927.5 694.1 L929.2 697.2 L930.4 697.2 L932.0 693.6 L933.7 697.6 L936.3 696.7 L938.5 696.8 L940.6 697.5 L942.2 700.4 L943.9 697.3 L945.7 696.4 L947.5 698.7 L949.6 696.6 L952.1 699.0 L954.1 696.3 L955.9 696.2 L958.1 697.2 L959.7 686.1 L961.4 697.0 L963.2 696.7 L965.1 697.5 L966.7 686.9 L968.4 697.8 L970.7 697.2 L972.7 697.5 L974.7 696.9 L976.4 696.8 L978.9 696.3 L978.8 697.4 L980.5 691.9 L982.1 697.5 L984.6 696.6 L986.4 696.7 L988.0 697.3 L989.7 689.9 L991.3 697.3 L993.9 698.5 L995.5 697.8 L997.2 690.6 L998.8 696.9 L1000.5 696.9 L1002.2 692.4 L1003.8 697.6 L1006.3 697.4 L1007.0 697.5 L1008.7 676.1 L1010.3 696.9 L1011.8 697.3 L1013.4 687.4 L1015.1 697.8 L1017.5 698.6 L1018.5 697.9 L1020.2 685.6 L1021.8 697.1 L1023.0 697.0 L1024.7 692.4 L1026.3 697.1 L1028.0 697.4 L1029.7 699.9 L1031.3 697.6 L1033.8 698.1 L1036.1 698.3 L1037.2 697.4 L1038.9 691.6 L1040.5 697.5 L1042.2 698.3 L1044.2 697.1 L1045.9 693.6 L1047.5 697.8 L1048.7 697.5 L1050.4 679.9 L1052.0 697.2 L1053.8 696.7 L1056.0 698.1 L1057.7 696.1 L1059.8 697.7 L1061.8 696.6 L1063.0 697.5 L1064.6 689.9 L1066.3 696.9 L1068.0 697.2 L1069.6 699.9 L1071.3 697.4 L1073.5 697.9 L1075.1 692.4 L1076.8 697.5 L1079.2 697.4 L1081.1 696.7 L1083.6 698.1 L1085.5 696.0 L1086.2 697.4 L1087.8 704.9 L1089.5 697.6 L1091.5 696.7 L1093.8 698.8 L1095.6 696.0 L1096.7 697.2 L1098.3 693.6 L1100.0 697.3 L1101.2 697.6 L1102.8 692.9 L1104.5 697.1 L1106.7 697.7 L1108.3 692.9 L1110.0 697.6 L1112.1 696.5 L1114.7 696.9 L1116.7 697.7 L1118.3 680.6 L1120.0 697.1 L1121.8 698.3 L1123.7 698.9 L1125.4 697.4 L1127.1 699.9 L1128.7 697.1 L1129.7 697.1 L1131.3 689.4 L1133.0 697.3 L1135.2 698.8 L1137.0 697.1 L1139.1 697.1 L1140.8 694.1 L1142.4 697.9 L1144.2 696.1 L1145.8 697.1 L1148.3 698.6 L1148.4 697.6 L1150.0 692.4 L1151.7 697.9 L1154.2 696.9 L1156.0 698.8 L1158.3 696.0 L1160.6 697.1 L1161.1 697.3 L1162.8 688.6 L1164.4 697.2 L1166.2 695.9 L1168.1 697.0 L1170.6 696.3 L1173.2 696.5 L1174.1 697.3 L1175.8 700.4 L1177.5 682.9 L1179.2 697.7 L1181.6 697.2 L1183.2 697.4 L1185.2 698.8 L1187.0 697.0 L1189.5 696.0 L1191.6 697.3 L1193.2 692.4 L1194.9 697.7 L1197.3 696.0 L1199.1 696.9 L1200.7 689.9 L1202.4 697.0 L1204.9 696.7 L1205.3 697.6 L1207.0 692.4 L1208.6 697.8 L1210.6 697.2 L1212.2 690.4 L1213.9 697.2 L1216.4 697.8 L1217.8 697.2 L1219.5 701.1 L1222.5 692.4 L1224.1 697.6 L1226.0 696.8 L1226.6 696.9 L1228.2 706.9 L1229.9 697.7 L1232.4 697.9 L1233.8 697.8 L1235.5 681.9 L1237.1 696.9 L1238.9 697.4 L1241.5 698.9 L1242.0 697.3 L1243.7 703.1 L1245.3 697.2 L1247.4 697.4 L1249.9 696.5 L1251.0 697.7 L1252.7 690.6 L1254.3 697.6 L1256.8 698.3 L1259.0 696.9 L1261.0 697.2 L1262.7 684.1 L1264.3 697.3 L1266.7 696.1 L1268.5 698.2 L1270.3 697.1 L1271.9 701.1 L1273.6 697.0 L1275.2 697.6 L1277.1 698.9 L1279.6 699.0 L1281.5 696.2 L1283.2 697.4 L1285.5 697.3 L1285.7 697.1 L1287.4 716.6 L1289.0 697.3 L1291.3 698.0 L1293.0 697.6 L1294.6 679.9 L1296.3 697.7 L1298.6 696.3 L1300.2 697.7 L1301.9 694.1 L1303.5 697.2 L1305.7 697.1 L1307.0 697.6 L1308.6 706.6 L1310.3 697.1 L1312.1 696.7 L1313.9 698.6 L1316.1 696.9 L1318.1 699.0 L1320.2 697.4 L1321.9 689.4 L1324.9 687.4 L1326.5 697.1 L1328.9 697.9 L1330.2 697.9 L1331.9 704.9 L1334.9 689.1 L1336.5 697.0 L1338.6 698.4 L1341.0 698.7 L1342.7 696.8 L1343.9 697.0 L1345.6 694.9 L1347.2 697.1 L1349.8 697.7 L1352.3 697.1 L1354.8 697.3 L1354.9 697.2 L1356.6 682.4 L1359.8 687.4 L1361.5 697.7" fill="none" stroke="#2f6ef7" stroke-width="2.200" stroke-linejoin="round" stroke-linecap="round"/></svg>
<span class="t" style="left:84.40px;top:773.55px;font-size:13.5px;color:#555;letter-spacing:0.103px;transform:rotate(90deg);">20130101</span>
<span class="t" style="left:113.29px;top:773.55px;font-size:13.5px;color:#555;letter-spacing:0.103px;transform:rotate(90deg);">20130131</span>
<span class="t" style="left:142.19px;top:773.55px;font-size:13.5px;color:#555;letter-spacing:0.103px;transform:rotate(90deg);">20130313</span>
<span class="t" style="left:171.09px;top:773.55px;font-size:13.5px;color:#555;letter-spacing:0.103px;transform:rotate(90deg);">20130416</span>
<span class="t" style="left:199.98px;top:773.55px;font-size:13.5px;color:#555;letter-spacing:0.103px;transform:rotate(90deg);">20130521</span>
<span class="t" style="left:228.87px;top:773.55px;font-size:13.5px;color:#555;letter-spacing:0.103px;transform:rotate(90deg);">20130617</span>
<span class="t" style="left:257.77px;top:773.55px;font-size:13.5px;color:#555;letter-spacing:0.103px;transform:rotate(90deg);">20130726</span>
<span class="t" style="left:286.67px;top:773.55px;font-size:13.5px;color:#555;letter-spacing:0.103px;transform:rotate(90deg);">20130823</span>
<span class="t" style="left:315.56px;top:773.55px;font-size:13.5px;color:#555;letter-spacing:0.103px;transform:rotate(90deg);">20130928</span>
<span class="t" style="left:344.46px;top:773.55px;font-size:13.5px;color:#555;letter-spacing:0.248px;transform:rotate(90deg);">20131107</span>
<span class="t" style="left:373.35px;top:773.55px;font-size:13.5px;color:#555;letter-spacing:0.103px;transform:rotate(90deg);">20131218</span>
<span class="t" style="left:402.25px;top:773.55px;font-size:13.5px;color:#555;letter-spacing:0.103px;transform:rotate(90deg);">20140126</span>
<span class="t" style="left:431.14px;top:773.55px;font-size:13.5px;color:#555;letter-spacing:0.103px;transform:rotate(90deg);">20140304</span>
<span class="t" style="left:460.04px;top:773.55px;font-size:13.5px;color:#555;letter-spacing:0.103px;transform:rotate(90deg);">20140409</span>
<span class="t" style="left:488.93px;top:773.55px;font-size:13.5px;color:#555;letter-spacing:0.103px;transform:rotate(90deg);">20140513</span>
<span class="t" style="left:517.83px;top:773.55px;font-size:13.5px;color:#555;letter-spacing:0.103px;transform:rotate(90deg);">20140610</span>
<span class="t" style="left:546.72px;top:773.55px;font-size:13.5px;color:#555;letter-spacing:0.103px;transform:rotate(90deg);">20140718</span>
<span class="t" style="left:575.62px;top:773.55px;font-size:13.5px;color:#555;letter-spacing:0.103px;transform:rotate(90deg);">20140820</span>
<span class="t" style="left:604.51px;top:773.55px;font-size:13.5px;color:#555;letter-spacing:0.103px;transform:rotate(90deg);">20140919</span>
<span class="t" style="left:633.40px;top:773.55px;font-size:13.5px;color:#555;letter-spacing:0.103px;transform:rotate(90deg);">20141019</span>
<span class="t" style="left:662.30px;top:773.55px;font-size:13.5px;color:#555;letter-spacing:0.248px;transform:rotate(90deg);">20141122</span>
<span class="t" style="left:691.19px;top:773.55px;font-size:13.5px;color:#555;letter-spacing:0.103px;transform:rotate(90deg);">20141223</span>
<span class="t" style="left:720.09px;top:773.55px;font-size:13.5px;color:#555;letter-spacing:0.248px;transform:rotate(90deg);">20150118</span>
<span class="t" style="left:748.99px;top:773.55px;font-size:13.5px;color:#555;letter-spacing:0.103px;transform:rotate(90deg);">20150216</span>
<span class="t" style="left:777.88px;top:773.55px;font-size:13.5px;color:#555;letter-spacing:0.103px;transform:rotate(90deg);">20150319</span>
<span class="t" style="left:806.77px;top:773.55px;font-size:13.5px;color:#555;letter-spacing:0.103px;transform:rotate(90deg);">20150421</span>
<span class="t" style="left:835.67px;top:773.55px;font-size:13.5px;color:#555;letter-spacing:0.103px;transform:rotate(90deg);">20150521</span>
<span class="t" style="left:864.56px;top:773.55px;font-size:13.5px;color:#555;letter-spacing:0.103px;transform:rotate(90deg);">20150630</span>
<span class="t" style="left:893.46px;top:773.55px;font-size:13.5px;color:#555;letter-spacing:0.103px;transform:rotate(90deg);">20150801</span>
<span class="t" style="left:922.36px;top:773.55px;font-size:13.5px;color:#555;letter-spacing:0.103px;transform:rotate(90deg);">20150912</span>
<span class="t" style="left:951.25px;top:773.55px;font-size:13.5px;color:#555;letter-spacing:0.103px;transform:rotate(90deg);">20151017</span>
<span class="t" style="left:980.14px;top:773.55px;font-size:13.5px;color:#555;letter-spacing:0.248px;transform:rotate(90deg);">20151126</span>
<span class="t" style="left:1009.04px;top:773.55px;font-size:13.5px;color:#555;letter-spacing:0.103px;transform:rotate(90deg);">20151231</span>
<span class="t" style="left:1037.93px;top:773.55px;font-size:13.5px;color:#555;letter-spacing:0.103px;transform:rotate(90deg);">20160214</span>
<span class="t" style="left:1066.83px;top:773.55px;font-size:13.5px;color:#555;letter-spacing:0.103px;transform:rotate(90deg);">20160318</span>
<span class="t" style="left:1095.72px;top:773.55px;font-size:13.5px;color:#555;letter-spacing:0.103px;transform:rotate(90deg);">20160413</span>
<span class="t" style="left:1124.62px;top:773.55px;font-size:13.5px;color:#555;letter-spacing:0.103px;transform:rotate(90deg);">20160509</span>
<span class="t" style="left:1153.51px;top:773.55px;font-size:13.5px;color:#555;letter-spacing:0.103px;transform:rotate(90deg);">20160608</span>
<span class="t" style="left:1182.41px;top:773.55px;font-size:13.5px;color:#555;letter-spacing:0.103px;transform:rotate(90deg);">20160716</span>
<span class="t" style="left:1211.30px;top:773.55px;font-size:13.5px;color:#555;letter-spacing:0.103px;transform:rotate(90deg);">20160814</span>
<span class="t" style="left:1240.20px;top:773.55px;font-size:13.5px;color:#555;letter-spacing:0.103px;transform:rotate(90deg);">20160915</span>
<span class="t" style="left:1269.09px;top:773.55px;font-size:13.5px;color:#555;letter-spacing:0.103px;transform:rotate(90deg);">20161018</span>
<span class="t" style="left:1297.99px;top:773.55px;font-size:13.5px;color:#555;letter-spacing:0.248px;transform:rotate(90deg);">20161120</span>
<span class="t" style="left:1326.88px;top:773.55px;font-size:13.5px;color:#555;letter-spacing:0.103px;transform:rotate(90deg);">20161227</span>
<span class="t" style="left:688.70px;top:814.60px;font-size:13px;color:#333;letter-spacing:0.118px;">report_date(day)</span>
<div style="left:34px;top:836px;width:1359.5px;height:22px;background:#d3ddf4"></div>
<svg style="left:0px;top:0px;" width="1441" height="971" viewBox="0 0 1441 971"><path d="M34 852.6 L36.0 852.6 L37.8 851.2 L39.6 852.6 L37.4 852.6 L39.2 855.9 L41.0 852.6 L43.9 852.6 L47.2 852.7 L50.9 852.3 L53.5 852.8 L56.5 852.4 L61.0 852.6 L61.9 852.6 L63.7 850.4 L65.5 852.6 L63.5 852.6 L65.3 850.5 L67.1 852.6 L70.0 852.6 L71.8 850.1 L73.6 852.6 L72.2 852.6 L74.0 853.6 L75.8 852.6 L78.2 852.6 L80.0 851.8 L81.8 852.6 L84.5 852.6 L86.3 856.0 L88.1 852.6 L92.3 852.6 L96.0 852.4 L99.8 852.9 L103.3 852.8 L104.9 852.6 L106.7 841.5 L108.5 852.6 L110.3 852.6 L112.1 851.9 L113.9 852.6 L117.8 852.3 L121.8 852.7 L124.9 852.3 L128.0 852.6 L129.8 850.7 L131.6 852.6 L135.9 852.6 L138.9 852.6 L140.7 851.9 L142.5 852.6 L144.4 852.6 L146.2 851.4 L148.0 852.6 L151.9 852.9 L152.6 852.6 L154.4 853.1 L156.2 852.6 L160.1 852.9 L163.4 852.8 L166.8 852.9 L171.0 852.3 L173.8 852.4 L175.7 852.6 L177.5 853.2 L179.3 852.6 L183.7 852.6 L185.2 852.6 L187.0 851.5 L188.8 852.6 L192.6 852.5 L196.1 852.5 L199.3 852.7 L200.8 852.6 L202.6 851.9 L204.4 852.6 L208.0 852.9 L210.6 852.6 L212.4 850.9 L214.2 852.6 L218.0 852.9 L217.9 852.6 L219.7 853.3 L221.5 852.6 L225.7 852.9 L224.7 852.6 L226.5 855.0 L228.3 852.6 L227.7 852.6 L229.5 848.9 L231.3 852.6 L231.5 852.6 L233.3 851.9 L235.1 852.6 L239.0 852.4 L243.2 852.9 L247.5 852.6 L249.5 852.6 L251.3 851.4 L253.1 852.6 L257.0 852.4 L257.4 852.6 L259.2 853.5 L261.0 852.6 L265.2 852.7 L265.6 852.6 L267.4 850.3 L269.2 852.6 L272.2 852.3 L273.5 852.6 L275.3 849.0 L277.1 852.6 L281.3 852.9 L281.4 852.6 L283.2 851.8 L285.0 852.6 L287.6 852.8 L289.2 852.6 L291.0 848.9 L292.8 852.6 L296.2 852.4 L299.3 852.8 L303.5 852.3 L303.1 852.6 L304.9 850.3 L306.7 852.6 L305.0 852.6 L306.8 853.1 L308.6 852.6 L312.4 852.3 L316.3 852.5 L318.1 852.6 L319.9 851.9 L321.7 852.6 L326.0 852.9 L329.5 852.9 L332.6 852.3 L336.3 852.3 L336.6 852.6 L338.4 849.6 L340.2 852.6 L343.1 852.5 L346.8 852.4 L349.4 852.9 L352.6 852.9 L356.9 852.5 L356.8 852.6 L358.6 849.1 L360.4 852.6 L361.7 852.6 L363.5 850.5 L365.3 852.6 L365.0 852.6 L366.8 851.1 L368.6 852.6 L372.0 852.6 L375.8 852.7 L377.2 852.6 L379.0 853.1 L380.8 852.6 L383.5 852.6 L385.3 852.0 L387.1 852.6 L390.7 852.7 L391.6 852.6 L393.4 851.2 L395.2 852.6 L399.6 852.6 L400.3 852.6 L402.1 852.9 L403.9 852.6 L407.3 852.8 L410.3 852.5 L414.7 852.6 L418.3 852.3 L421.7 852.7 L424.2 852.7 L428.0 852.3 L431.7 852.6 L434.1 852.6 L435.9 853.8 L437.7 852.6 L441.5 852.5 L445.4 852.8 L448.0 852.3 L451.8 852.9 L453.1 852.6 L454.9 850.9 L456.7 852.6 L459.7 852.6 L463.4 852.5 L466.7 852.5 L469.9 852.7 L470.3 852.6 L472.1 851.7 L473.9 852.6 L477.0 852.5 L481.0 852.3 L484.7 852.8 L484.5 852.6 L486.3 852.2 L488.1 852.6 L491.2 852.4 L495.3 852.4 L498.2 852.6 L502.0 852.3 L502.2 852.6 L504.0 853.3 L505.8 852.6 L508.9 852.5 L510.9 852.6 L512.7 851.8 L514.5 852.6 L518.6 852.6 L517.7 852.6 L519.5 851.9 L521.3 852.6 L521.8 852.6 L523.6 852.1 L525.4 852.6 L529.6 852.4 L529.4 852.6 L531.2 853.1 L533.0 852.6 L533.5 852.6 L535.3 852.2 L537.1 852.6 L540.2 852.7 L542.5 852.6 L544.3 852.1 L546.1 852.6 L550.3 852.6 L553.3 852.6 L555.1 853.0 L556.9 852.6 L559.9 852.3 L563.5 852.4 L567.6 852.8 L570.4 852.4 L571.0 852.6 L572.8 852.3 L574.6 852.6 L578.8 852.7 L580.6 852.6 L582.4 852.3 L584.2 852.6 L588.3 852.5 L591.0 852.5 L593.4 852.6 L595.2 852.3 L597.0 852.6 L601.1 852.4 L601.5 852.6 L603.3 853.1 L605.1 852.6 L608.3 852.5 L611.7 852.5 L616.0 852.4 L618.5 852.9 L622.8 852.9 L626.2 852.9 L627.4 852.6 L629.2 849.7 L631.0 852.6 L632.3 852.6 L634.1 849.9 L635.9 852.6 L636.9 852.6 L638.7 851.9 L640.5 852.6 L644.9 852.4 L644.3 852.6 L646.1 853.1 L647.9 852.6 L651.9 852.8 L654.6 852.6 L656.4 851.9 L658.2 852.6 L657.9 852.6 L659.7 851.8 L661.5 852.6 L662.3 852.6 L664.1 851.8 L665.9 852.6 L669.7 852.6 L672.8 852.5 L675.7 852.3 L676.4 852.6 L678.2 853.0 L680.0 852.6 L682.7 852.6 L684.5 851.6 L686.3 852.6 L690.0 852.5 L694.1 852.3 L698.4 852.7 L702.7 852.9 L707.0 852.7 L709.6 852.8 L712.4 852.5 L713.2 852.6 L715.0 851.7 L716.8 852.6 L714.5 852.6 L716.3 853.1 L718.1 852.6 L716.2 852.6 L718.0 851.7 L719.8 852.6 L723.6 852.6 L726.9 852.9 L730.7 852.5 L733.7 852.9 L735.8 852.6 L737.6 851.7 L739.4 852.6 L742.8 852.8 L744.5 852.6 L746.3 851.8 L748.1 852.6 L747.8 852.6 L749.6 850.7 L751.4 852.6 L750.8 852.6 L752.6 853.3 L754.4 852.6 L757.6 852.4 L761.1 852.8 L764.0 852.8 L768.3 852.8 L772.5 852.3 L776.2 852.9 L777.2 852.6 L779.0 851.4 L780.8 852.6 L782.1 852.6 L783.9 848.8 L785.7 852.6 L788.3 852.4 L790.0 852.6 L791.8 850.1 L793.6 852.6 L796.6 852.6 L797.6 852.6 L799.4 852.2 L801.2 852.6 L804.5 852.6 L807.1 852.6 L808.9 852.9 L810.7 852.6 L814.8 852.3 L813.9 852.6 L815.7 852.2 L817.5 852.6 L820.1 852.3 L822.9 852.3 L827.3 852.8 L830.0 852.6 L830.8 852.6 L832.6 850.1 L834.4 852.6 L833.8 852.6 L835.6 851.2 L837.4 852.6 L840.5 852.5 L843.8 852.7 L847.4 852.5 L850.3 852.5 L851.2 852.6 L853.0 852.3 L854.8 852.6 L857.6 852.6 L858.9 852.6 L860.7 852.3 L862.5 852.6 L866.4 852.5 L868.9 852.6 L870.7 852.2 L872.5 852.6 L875.2 852.4 L876.6 852.6 L878.4 852.2 L880.2 852.6 L883.4 852.7 L885.8 852.6 L887.6 848.9 L889.4 852.6 L891.0 852.6 L892.8 855.0 L894.6 852.6 L898.7 852.5 L902.8 852.7 L901.9 852.6 L903.7 853.1 L905.5 852.6 L908.9 852.5 L912.3 852.7 L915.7 852.7 L918.8 852.6 L920.6 852.2 L922.4 852.6 L923.7 852.6 L925.5 852.1 L927.3 852.6 L930.7 852.4 L934.3 852.7 L934.8 852.6 L936.6 853.0 L938.4 852.6 L941.0 852.5 L944.4 852.9 L948.8 852.5 L953.1 852.8 L953.9 852.6 L955.7 851.1 L957.5 852.6 L960.5 852.6 L961.5 852.6 L963.3 851.2 L965.1 852.6 L967.8 852.8 L971.7 852.9 L975.7 852.7 L976.5 852.6 L978.3 851.9 L980.1 852.6 L984.0 852.6 L986.5 852.6 L988.3 851.6 L990.1 852.6 L992.8 852.7 L994.7 852.6 L996.5 851.7 L998.3 852.6 L1000.2 852.6 L1002.0 851.9 L1003.8 852.6 L1006.3 852.4 L1007.2 852.6 L1009.0 849.7 L1010.8 852.6 L1012.4 852.6 L1014.2 851.2 L1016.0 852.6 L1020.1 852.3 L1019.8 852.6 L1021.6 851.0 L1023.4 852.6 L1024.7 852.6 L1026.5 851.9 L1028.3 852.6 L1030.1 852.6 L1031.9 852.9 L1033.7 852.6 L1036.4 852.3 L1040.7 852.4 L1040.2 852.6 L1042.0 851.8 L1043.8 852.6 L1046.3 852.8 L1047.8 852.6 L1049.6 852.1 L1051.4 852.6 L1052.7 852.6 L1054.5 850.2 L1056.3 852.6 L1059.1 852.8 L1062.9 852.8 L1067.3 852.7 L1068.2 852.6 L1070.0 851.6 L1071.8 852.6 L1073.7 852.6 L1075.5 852.9 L1077.3 852.6 L1079.7 852.6 L1081.5 851.9 L1083.3 852.6 L1087.4 852.3 L1091.4 852.6 L1093.6 852.6 L1095.4 853.6 L1097.2 852.6 L1101.1 852.3 L1105.1 852.9 L1105.0 852.6 L1106.8 852.1 L1108.6 852.6 L1109.9 852.6 L1111.7 852.0 L1113.5 852.6 L1115.9 852.6 L1117.7 852.0 L1119.5 852.6 L1122.1 852.5 L1125.7 852.8 L1126.8 852.6 L1128.6 850.3 L1130.4 852.6 L1133.4 852.4 L1136.3 852.6 L1138.1 852.9 L1139.9 852.6 L1140.9 852.6 L1142.7 851.5 L1144.5 852.6 L1147.5 852.7 L1151.5 852.5 L1151.3 852.6 L1153.1 852.2 L1154.9 852.6 L1158.1 852.5 L1161.3 852.5 L1161.4 852.6 L1163.2 851.9 L1165.0 852.6 L1167.6 852.6 L1172.1 852.5 L1175.2 852.6 L1177.0 851.4 L1178.8 852.6 L1182.8 852.4 L1186.7 852.8 L1189.4 852.6 L1191.2 853.0 L1193.0 852.6 L1191.3 852.6 L1193.1 850.6 L1194.9 852.6 L1198.8 852.6 L1202.2 852.7 L1206.5 852.4 L1208.5 852.6 L1210.3 851.9 L1212.1 852.6 L1214.8 852.8 L1216.6 852.6 L1218.4 851.6 L1220.2 852.6 L1224.6 852.6 L1223.4 852.6 L1225.2 851.9 L1227.0 852.6 L1229.2 852.6 L1231.0 851.7 L1232.8 852.6 L1236.1 852.8 L1237.1 852.6 L1238.9 853.1 L1240.7 852.6 L1240.3 852.6 L1242.1 851.9 L1243.9 852.6 L1246.6 852.6 L1248.4 853.9 L1250.2 852.6 L1253.1 852.4 L1254.5 852.6 L1256.3 850.5 L1258.1 852.6 L1261.0 852.7 L1263.5 852.6 L1265.3 853.4 L1267.1 852.6 L1270.2 852.4 L1273.3 852.6 L1275.1 851.7 L1276.9 852.6 L1280.8 852.9 L1283.8 852.7 L1284.2 852.6 L1286.0 850.8 L1287.8 852.6 L1291.1 852.8 L1294.2 852.6 L1296.0 853.1 L1297.8 852.6 L1301.5 852.4 L1304.4 852.3 L1307.9 852.5 L1310.8 852.5 L1311.1 852.6 L1312.9 855.2 L1314.7 852.6 L1317.9 852.8 L1319.0 852.6 L1320.8 850.2 L1322.6 852.6 L1325.4 852.9 L1326.9 852.6 L1328.7 852.2 L1330.5 852.6 L1334.0 852.7 L1334.3 852.6 L1336.1 853.8 L1337.9 852.6 L1341.3 852.8 L1345.5 852.6 L1348.9 852.8 L1348.7 852.6 L1350.5 851.5 L1352.3 852.6 L1352.0 852.6 L1353.8 851.2 L1355.6 852.6 L1359.8 852.5 L1359.6 852.6 L1361.4 853.6 L1363.2 852.6 L1362.9 852.6 L1364.7 851.5 L1366.5 852.6 L1370.4 852.9 L1373.9 852.4 L1374.6 852.6 L1376.4 852.3 L1378.2 852.6 L1381.1 852.8 L1385.0 852.9 L1386.6 852.6 L1388.4 850.6 L1390.2 852.6 L1390.1 852.6 L1391.9 851.2 L1393.7 852.6 L1393.5 852.6" fill="none" stroke="#b7c0d4" stroke-width="1"/><path d="M106.500 836v21.500" stroke="#bcc4d6" stroke-width="1"/><path d="M34.500 836v22M1393 836v22" stroke="#b7c0d4" stroke-width="1"/></svg>
<svg style="left:23.5px;top:836.8px;" width="20" height="20" viewBox="0 0 20 20"><circle cx="10" cy="10" r="8.600" fill="#fff" stroke="#c9cdd6" stroke-width="1"/><path d="M8.400 6.800v6.400M11.600 6.800v6.400" stroke="#b9bdc7" stroke-width="1.100"/></svg>
<svg style="left:1383.5px;top:836.8px;" width="20" height="20" viewBox="0 0 20 20"><circle cx="10" cy="10" r="8.600" fill="#fff" stroke="#c9cdd6" stroke-width="1"/><path d="M8.400 6.800v6.400M11.600 6.800v6.400" stroke="#b9bdc7" stroke-width="1.100"/></svg>
<span class="t" style="left:48.20px;top:839.30px;font-size:14px;color:#8a8f99;letter-spacing:-0.571px;">20130101</span>
<span class="t" style="left:1320.00px;top:839.30px;font-size:14px;color:#8a8f99;letter-spacing:-0.357px;">20161230</span>
<div style="left:1342.3px;top:738px;width:30.2px;height:89.4px;box-sizing:border-box;border:3.500px solid #e8412b;border-radius:7px"></div>
<span class="t" style="left:23.00px;top:889.10px;font-size:16px;color:#2b2b2b;letter-spacing:0.032px;font-weight:700;">交叉表-company</span>
<span class="t" style="left:1301.70px;top:890.30px;font-size:13px;color:#333;letter-spacing:0.018px;">已选字段(8)</span>
<svg style="left:1374px;top:893px;" width="11" height="8" viewBox="0 0 11 8"><path d="M0.500 1h9.500L5.250 7z" fill="#5f6673"/></svg>
<svg style="left:36px;top:923px;" width="14" height="14" viewBox="0 0 14 14"><g fill="none" stroke="#3f80f5" stroke-width="1.300"><path d="M2.300 1.500v10.300h9.500M2.300 2.200h7M5.500 6.800h6.300"/></g></svg>
<svg style="left:55.5px;top:928px;" width="11" height="8" viewBox="0 0 11 8"><path d="M0.500 1h9L5 6.800z" fill="#6b6f78"/></svg>
<span class="t" style="left:70.20px;top:925.05px;font-size:13.5px;color:#222;letter-spacing:0.115px;">area/product_type/product_box/shipping_type</span>
<div style="left:489.5px;top:914.3px;width:1px;height:60px;background:#d5dcea"></div>
<span class="t" style="left:631.30px;top:925.05px;font-size:13.5px;color:#222;letter-spacing:-0.268px;">back_point</span>
<svg style="left:696.9px;top:924.8px;" width="14" height="14" viewBox="0 0 14 14"><circle cx="7" cy="7" r="5.3" fill="none" stroke="#222" stroke-width="1"/><rect x="6.45" y="6.200" width="1.100" height="3.800" fill="#222"/><rect x="6.45" y="3.900" width="1.100" height="1.200" fill="#222"/></svg>
<span class="t" style="left:864.60px;top:925.05px;font-size:13.5px;color:#222;letter-spacing:-0.192px;">profit_amt</span>
<svg style="left:924.6px;top:924.8px;" width="14" height="14" viewBox="0 0 14 14"><circle cx="7" cy="7" r="5.3" fill="none" stroke="#222" stroke-width="1"/><rect x="6.45" y="6.200" width="1.100" height="3.800" fill="#222"/><rect x="6.45" y="3.900" width="1.100" height="1.200" fill="#222"/></svg>
<span class="t" style="left:1096.50px;top:925.05px;font-size:13.5px;color:#222;letter-spacing:-0.191px;">price</span>
<svg style="left:1126px;top:924.8px;" width="14" height="14" viewBox="0 0 14 14"><circle cx="7" cy="7" r="5.3" fill="none" stroke="#222" stroke-width="1"/><rect x="6.45" y="6.200" width="1.100" height="3.800" fill="#222"/><rect x="6.45" y="3.900" width="1.100" height="1.200" fill="#222"/></svg>
<span class="t" style="left:1291.60px;top:925.05px;font-size:13.5px;color:#222;letter-spacing:-0.105px;">shipping_cost</span>
<svg style="left:1375px;top:924.8px;" width="14" height="14" viewBox="0 0 14 14"><circle cx="7" cy="7" r="5.3" fill="none" stroke="#222" stroke-width="1"/><rect x="6.45" y="6.200" width="1.100" height="3.800" fill="#222"/><rect x="6.45" y="3.900" width="1.100" height="1.200" fill="#222"/></svg>
<div style="left:23px;top:949.2px;width:1381px;height:1.3px;background:#3f80f5"></div>
<svg style="left:36px;top:958px;" width="14" height="14" viewBox="0 0 14 14"><circle cx="7" cy="7" r="6.300" fill="#2f6bff"/><rect x="3.600" y="6.300" width="6.800" height="1.500" fill="#fff"/></svg>
<span class="t" style="left:54.00px;top:961.50px;font-size:14px;color:#222;letter-spacing:-0.800px;">东北</span>
<span class="t" style="left:660.40px;top:961.75px;font-size:13.5px;color:#222;">13.53</span>
<span class="t" style="left:890.30px;top:961.75px;font-size:13.5px;color:#222;">5.764万</span>
<span class="t" style="left:1090.70px;top:961.75px;font-size:13.5px;color:#222;">2.963万</span>
<span class="t" style="left:1357.95px;top:961.75px;font-size:13.5px;color:#222;">3515</span>
<div class="clip" style="left:10px;top:196px;width:699px;height:329px;pointer-events:none">
<span class="t wm" style="left:2.4px;top:77px;">liuyl881001 2025-01-03 13:12:32</span>
<span class="t wm" style="left:564.8px;top:77px;">liuyl881001 2025-01-03 13:12:32</span>
<span class="t wm" style="left:2.4px;top:231px;">liuyl881001 2025-01-03 13:12:32</span>
<span class="t wm" style="left:564.8px;top:231px;">liuyl881001 2025-01-03 13:12:32</span>
<span class="t wm" style="left:2.4px;top:385px;">liuyl881001 2025-01-03 13:12:32</span>
<span class="t wm" style="left:564.8px;top:385px;">liuyl881001 2025-01-03 13:12:32</span>
</div>
<div class="clip" style="left:718px;top:196px;width:700px;height:329px;pointer-events:none">
<span class="t wm" style="left:2.4px;top:77px;">liuyl881001 2025-01-03 13:12:32</span>
<span class="t wm" style="left:564.8px;top:77px;">liuyl881001 2025-01-03 13:12:32</span>
<span class="t wm" style="left:2.4px;top:231px;">liuyl881001 2025-01-03 13:12:32</span>
<span class="t wm" style="left:564.8px;top:231px;">liuyl881001 2025-01-03 13:12:32</span>
<span class="t wm" style="left:2.4px;top:385px;">liuyl881001 2025-01-03 13:12:32</span>
<span class="t wm" style="left:564.8px;top:385px;">liuyl881001 2025-01-03 13:12:32</span>
</div>
<div class="clip" style="left:10px;top:534px;width:1408px;height:333px;pointer-events:none">
<span class="t wm" style="left:2.4px;top:77px;">liuyl881001 2025-01-03 13:12:32</span>
<span class="t wm" style="left:564.8px;top:77px;">liuyl881001 2025-01-03 13:12:32</span>
<span class="t wm" style="left:1127.2px;top:77px;">liuyl881001 2025-01-03 13:12:32</span>
<span class="t wm" style="left:2.4px;top:231px;">liuyl881001 2025-01-03 13:12:32</span>
<span class="t wm" style="left:564.8px;top:231px;">liuyl881001 2025-01-03 13:12:32</span>
<span class="t wm" style="left:1127.2px;top:231px;">liuyl881001 2025-01-03 13:12:32</span>
<span class="t wm" style="left:2.4px;top:385px;">liuyl881001 2025-01-03 13:12:32</span>
<span class="t wm" style="left:564.8px;top:385px;">liuyl881001 2025-01-03 13:12:32</span>
<span class="t wm" style="left:1127.2px;top:385px;">liuyl881001 2025-01-03 13:12:32</span>
</div>
<div class="clip" style="left:10px;top:876px;width:1408px;height:95px;pointer-events:none">
<span class="t wm" style="left:2.4px;top:77px;">liuyl881001 2025-01-03 13:12:32</span>
<span class="t wm" style="left:564.8px;top:77px;">liuyl881001 2025-01-03 13:12:32</span>
<span class="t wm" style="left:1127.2px;top:77px;">liuyl881001 2025-01-03 13:12:32</span>
</div>
<div style="left:0px;top:967px;width:1854px;height:4px;background:#3a302a"></div>
<div style="left:54.5px;top:967px;width:360px;height:4px;background:#e6e6e6;border-top:1px solid #b5b5b5;box-sizing:border-box"></div>
<div style="left:0px;top:967px;width:54.5px;height:4px;background:#232323"></div>
<div style="left:352px;top:969.3px;width:15px;height:2px;background:#a9c98f;border-radius:2px 2px 0 0"></div>
<div style="left:1441px;top:151px;width:413px;height:816px;background:#313237"></div>
<div style="left:1441px;top:151px;width:1px;height:816px;background:#45464b"></div>
<div style="left:1712px;top:151px;width:1px;height:816px;background:#45464b"></div>
<span class="t" style="left:1456.60px;top:165.80px;font-size:16px;color:#f2f2f3;letter-spacing:0.082px;">线图-company</span>
<svg style="left:1681px;top:166.5px;" width="18" height="16" viewBox="0 0 18 16"><g fill="none" stroke="#cfd0d3" stroke-width="1.300"><path d="M1.500 2.500h14.500M1.500 8h8.500M1.500 13.500h14.500"/></g><path d="M12.300 5.200l4 2.800-4 2.800z" fill="#cfd0d3"/></svg>
<span class="t" style="left:1456.60px;top:207.85px;font-size:13.5px;color:#c9cacd;letter-spacing:-0.133px;">切换图表</span>
<div style="left:1523.3px;top:201.5px;width:175.3px;height:26.2px;box-sizing:border-box;border:1px solid #4a4b51;border-radius:4px;background:#2c2d32"></div>
<svg style="left:1533px;top:206px;" width="18" height="16" viewBox="0 0 18 16"><path d="M1.200 11.200l4.600-5.200 3.400 3 5.400-6" fill="none" stroke="#3f7bff" stroke-width="1.500"/><path d="M0.800 14.200h14.600" stroke="#3f7bff" stroke-width="1.500"/></svg>
<span class="t" style="left:1563.00px;top:206.60px;font-size:16px;color:#d0d1d4;letter-spacing:-0.316px;">线图</span>
<svg style="left:1683px;top:211px;" width="12" height="8" viewBox="0 0 12 8"><path d="M0.500 0.800h10.400L5.700 7.200z" fill="#9a9ba0"/></svg>
<div style="left:1441px;top:236.3px;width:271px;height:1px;background:#414247"></div>
<span class="t" style="left:1471.40px;top:251.80px;font-size:16px;color:#ffffff;letter-spacing:0.484px;">字段</span>
<span class="t" style="left:1561.80px;top:251.80px;font-size:16px;color:#8e8f94;letter-spacing:-0.416px;">样式</span>
<span class="t" style="left:1651.70px;top:251.80px;font-size:16px;color:#8e8f94;letter-spacing:-0.316px;">分析</span>
<div style="left:1441px;top:281px;width:271px;height:1px;background:#414247"></div>
<div style="left:1472px;top:278.2px;width:31px;height:3.2px;background:linear-gradient(90deg,#3f7bff,#7a6cf0)"></div>
<div style="left:1709.4px;top:283px;width:2.5px;height:538px;background:#3c3f4e"></div>
<span class="t" style="left:1458.60px;top:298.60px;font-size:18px;color:#e5413a;font-weight:700;">*</span>
<span class="t" style="left:1473.90px;top:298.30px;font-size:14px;color:#ffffff;letter-spacing:0.082px;font-weight:500;">类别轴/维度</span>
<svg style="left:1679.8px;top:297px;" width="16" height="16" viewBox="0 0 16 16"><g fill="none" stroke="#c4c5c9" stroke-width="1.100" stroke-linejoin="round"><path d="M12.25 6.87 L13.75 7.23 L13.75 8.77 L12.25 9.13 L11.80 10.21 L12.61 11.52 L11.52 12.61 L10.21 11.80 L9.13 12.25 L8.77 13.75 L7.23 13.75 L6.87 12.25 L5.79 11.80 L4.48 12.61 L3.39 11.52 L4.20 10.21 L3.75 9.13 L2.25 8.77 L2.25 7.23 L3.75 6.87 L4.20 5.79 L3.39 4.48 L4.48 3.39 L5.79 4.20 L6.87 3.75 L7.23 2.25 L8.77 2.25 L9.13 3.75 L10.21 4.20 L11.52 3.39 L12.61 4.48 L11.80 5.79Z"/><circle cx="8" cy="8" r="1.900"/></g></svg>
<div style="left:1456.7px;top:324.6px;width:238.1px;height:36px;box-sizing:border-box;border:1px dashed #55565c;border-radius:4px"></div>
<div style="left:1458.2px;top:326.4px;width:234.9px;height:26.4px;box-sizing:border-box;border:1.300px solid #3a78f2;border-radius:5px;background:#313c5b"></div>
<svg style="left:1467px;top:332px;" width="16" height="16" viewBox="0 0 16 16"><g fill="none" stroke="#3672f0" stroke-width="1.300"><rect x="1.600" y="2.600" width="12.400" height="11.400"/><path d="M4.600 0.800v2M11 0.800v2"/></g><path d="M5.200 5.300h2.600c2.100 0 3.300 1.200 3.300 3.100s-1.200 3.100-3.300 3.100H5.200zm1.300 1.100v4h1.200c1.300 0 2-.7 2-2s-.7-2-2-2z" fill="#3672f0"/></svg>
<span class="t" style="left:1486.40px;top:332.90px;font-size:14px;color:#ffffff;letter-spacing:-0.381px;">report_date(day)</span>
<div style="left:1665.1px;top:330.9px;width:18px;height:18px;background:#5d6479;border-radius:3px"></div>
<svg style="left:1665.1px;top:330.9px;" width="18" height="18" viewBox="0 0 18 18"><g fill="none" stroke="#fff" stroke-width="1.200"><path d="M2.200 5h8M2.200 8h8M2.200 11h8M2.200 14h8M13.800 14.600V3.600M12 5.600l1.800-2.200 1.800 2.200"/></g></svg>
<div style="left:1441px;top:375.4px;width:267px;height:1px;background:#414247"></div>
<span class="t" style="left:1458.60px;top:392.30px;font-size:18px;color:#e5413a;font-weight:700;">*</span>
<span class="t" style="left:1473.90px;top:392.00px;font-size:14px;color:#ffffff;letter-spacing:0.277px;font-weight:500;">值轴/度量</span>
<svg style="left:1679.8px;top:391.6px;" width="16" height="16" viewBox="0 0 16 16"><g fill="none" stroke="#c4c5c9" stroke-width="1.100" stroke-linejoin="round"><path d="M12.25 6.87 L13.75 7.23 L13.75 8.77 L12.25 9.13 L11.80 10.21 L12.61 11.52 L11.52 12.61 L10.21 11.80 L9.13 12.25 L8.77 13.75 L7.23 13.75 L6.87 12.25 L5.79 11.80 L4.48 12.61 L3.39 11.52 L4.20 10.21 L3.75 9.13 L2.25 8.77 L2.25 7.23 L3.75 6.87 L4.20 5.79 L3.39 4.48 L4.48 3.39 L5.79 4.20 L6.87 3.75 L7.23 2.25 L8.77 2.25 L9.13 3.75 L10.21 4.20 L11.52 3.39 L12.61 4.48 L11.80 5.79Z"/><circle cx="8" cy="8" r="1.900"/></g></svg>
<div style="left:1456.7px;top:418.2px;width:238.1px;height:36.4px;box-sizing:border-box;border:1px dashed #55565c;border-radius:4px"></div>
<div style="left:1458.2px;top:420.9px;width:234.9px;height:27px;box-sizing:border-box;border:1.300px solid #2fb765;border-radius:5px;background:#30453d"></div>
<span class="t" style="left:1468.00px;top:426.90px;font-size:13px;color:#2fb765;">№</span>
<span class="t" style="left:1486.40px;top:426.60px;font-size:14px;color:#ffffff;letter-spacing:-0.437px;">profit_amt(求和)</span>
<div style="left:1441px;top:469.7px;width:267px;height:1px;background:#414247"></div>
<span class="t" style="left:1456.60px;top:485.90px;font-size:14px;color:#ffffff;letter-spacing:-0.082px;font-weight:500;">颜色图例/维度</span>
<span class="t" style="left:1647.90px;top:485.90px;font-size:14px;color:#d0d1d4;letter-spacing:0.162px;">0 / 1</span>
<svg style="left:1679.8px;top:484.9px;" width="16" height="16" viewBox="0 0 16 16"><g fill="none" stroke="#c4c5c9" stroke-width="1.100" stroke-linejoin="round"><path d="M12.25 6.87 L13.75 7.23 L13.75 8.77 L12.25 9.13 L11.80 10.21 L12.61 11.52 L11.52 12.61 L10.21 11.80 L9.13 12.25 L8.77 13.75 L7.23 13.75 L6.87 12.25 L5.79 11.80 L4.48 12.61 L3.39 11.52 L4.20 10.21 L3.75 9.13 L2.25 8.77 L2.25 7.23 L3.75 6.87 L4.20 5.79 L3.39 4.48 L4.48 3.39 L5.79 4.20 L6.87 3.75 L7.23 2.25 L8.77 2.25 L9.13 3.75 L10.21 4.20 L11.52 3.39 L12.61 4.48 L11.80 5.79Z"/><circle cx="8" cy="8" r="1.900"/></g></svg>
<div style="left:1456.7px;top:513.2px;width:238.1px;height:30.399999999999977px;box-sizing:border-box;border:1px dashed #55565c;border-radius:4px"></div>
<span class="t" style="left:1515.30px;top:521.65px;font-size:13.5px;color:#5f6067;letter-spacing:-0.088px;">拖动数据字段至此处</span>
<div style="left:1441px;top:558px;width:267px;height:1px;background:#414247"></div>
<span class="t" style="left:1456.60px;top:575.00px;font-size:14px;color:#ffffff;letter-spacing:0.052px;font-weight:500;">拆分/维度</span>
<svg style="left:1521px;top:575px;" width="14" height="14" viewBox="0 0 14 14"><circle cx="7" cy="7" r="5.400" fill="none" stroke="#b9babf" stroke-width="1"/><rect x="6.450" y="6.200" width="1.100" height="3.800" fill="#b9babf"/><rect x="6.450" y="3.900" width="1.100" height="1.200" fill="#b9babf"/></svg>
<span class="t" style="left:1647.90px;top:575.00px;font-size:14px;color:#d0d1d4;letter-spacing:0.162px;">0 / 1</span>
<svg style="left:1679.8px;top:574px;" width="16" height="16" viewBox="0 0 16 16"><g fill="none" stroke="#c4c5c9" stroke-width="1.100" stroke-linejoin="round"><path d="M12.25 6.87 L13.75 7.23 L13.75 8.77 L12.25 9.13 L11.80 10.21 L12.61 11.52 L11.52 12.61 L10.21 11.80 L9.13 12.25 L8.77 13.75 L7.23 13.75 L6.87 12.25 L5.79 11.80 L4.48 12.61 L3.39 11.52 L4.20 10.21 L3.75 9.13 L2.25 8.77 L2.25 7.23 L3.75 6.87 L4.20 5.79 L3.39 4.48 L4.48 3.39 L5.79 4.20 L6.87 3.75 L7.23 2.25 L8.77 2.25 L9.13 3.75 L10.21 4.20 L11.52 3.39 L12.61 4.48 L11.80 5.79Z"/><circle cx="8" cy="8" r="1.900"/></g></svg>
<div style="left:1456.7px;top:601px;width:238.1px;height:31.799999999999955px;box-sizing:border-box;border:1px dashed #55565c;border-radius:4px"></div>
<span class="t" style="left:1515.30px;top:610.15px;font-size:13.5px;color:#5f6067;letter-spacing:-0.088px;">拖动数据字段至此处</span>
<div style="left:1441px;top:645.9px;width:267px;height:1px;background:#414247"></div>
<span class="t" style="left:1456.60px;top:663.90px;font-size:14px;color:#ffffff;letter-spacing:-0.082px;font-weight:500;">工具提示/度量</span>
<span class="t" style="left:1647.90px;top:663.90px;font-size:14px;color:#d0d1d4;letter-spacing:0.162px;">0 / 5</span>
<svg style="left:1679.8px;top:662.9px;" width="16" height="16" viewBox="0 0 16 16"><g fill="none" stroke="#c4c5c9" stroke-width="1.100" stroke-linejoin="round"><path d="M12.25 6.87 L13.75 7.23 L13.75 8.77 L12.25 9.13 L11.80 10.21 L12.61 11.52 L11.52 12.61 L10.21 11.80 L9.13 12.25 L8.77 13.75 L7.23 13.75 L6.87 12.25 L5.79 11.80 L4.48 12.61 L3.39 11.52 L4.20 10.21 L3.75 9.13 L2.25 8.77 L2.25 7.23 L3.75 6.87 L4.20 5.79 L3.39 4.48 L4.48 3.39 L5.79 4.20 L6.87 3.75 L7.23 2.25 L8.77 2.25 L9.13 3.75 L10.21 4.20 L11.52 3.39 L12.61 4.48 L11.80 5.79Z"/><circle cx="8" cy="8" r="1.900"/></g></svg>
<div style="left:1456.7px;top:690.3px;width:238.1px;height:31.40000000000009px;box-sizing:border-box;border:1px dashed #55565c;border-radius:4px"></div>
<span class="t" style="left:1515.30px;top:699.25px;font-size:13.5px;color:#5f6067;letter-spacing:-0.088px;">拖动数据字段至此处</span>
<div style="left:1441px;top:734.8px;width:267px;height:1px;background:#414247"></div>
<span class="t" style="left:1456.60px;top:752.70px;font-size:14px;color:#ffffff;letter-spacing:-0.900px;font-weight:500;">过滤器</span>
<div style="left:1456.7px;top:778.8px;width:238.1px;height:30.90000000000009px;box-sizing:border-box;border:1px dashed #55565c;border-radius:4px"></div>
<span class="t" style="left:1515.30px;top:787.50px;font-size:13.5px;color:#5f6067;letter-spacing:-0.088px;">拖动数据字段至此处</span>
<div style="left:1456.7px;top:844.4px;width:12.2px;height:12.2px;box-sizing:border-box;border:1px solid #55565c;border-radius:2px;background:#2c2d32"></div>
<div class="clip" style="left:1478px;top:844px;width:60px;height:12.500px">
<span class="t" style="left:1.90px;top:-1.25px;font-size:13.5px;color:#d0d1d4;letter-spacing:-0.367px;">自动刷新</span>
</div>
<div style="left:1442px;top:876.5px;width:270px;height:45.3px;background:#404146"></div>
<span class="t" style="left:1511.70px;top:892.80px;font-size:14px;color:#ffffff;letter-spacing:-0.333px;">结果展示</span>
<div style="left:1575.2px;top:886.3px;width:67.2px;height:25.8px;box-sizing:border-box;border:1px solid #55565c;border-radius:4px;background:#2b2c31"></div>
<span class="t" style="left:1582.30px;top:892.60px;font-size:14px;color:#e6e6e8;letter-spacing:-0.409px;">10000</span>
<div style="left:1442px;top:921.8px;width:270px;height:45.2px;background:#82adfc"></div>
<span class="t" style="left:1560.30px;top:936.30px;font-size:15px;color:#ffffff;letter-spacing:-0.086px;">更 新</span>
<div style="left:1478.5px;top:846.6px;width:177.3px;height:70.5px;box-sizing:border-box;border:3.500px solid #e8412b;border-radius:9px"></div>
<span class="t" style="left:1726.90px;top:168.00px;font-size:16px;color:#ffffff;letter-spacing:-0.316px;font-weight:500;">数据</span>
<div style="left:1721.8px;top:201.5px;width:140px;height:26.2px;background:#5990fb;border-radius:4px"></div>
<span class="t" style="left:1734.00px;top:207.30px;font-size:14px;color:#ffffff;letter-spacing:-0.452px;">company</span>
<span class="t" style="left:1728.10px;top:247.55px;font-size:13.5px;color:#ffffff;letter-spacing:0.100px;">字段</span>
<svg style="left:1759.8px;top:247.3px;" width="14" height="14" viewBox="0 0 14 14"><circle cx="7" cy="7" r="5.400" fill="none" stroke="#b9babf" stroke-width="1"/><rect x="6.450" y="6.200" width="1.100" height="3.800" fill="#b9babf"/><rect x="6.450" y="3.900" width="1.100" height="1.200" fill="#b9babf"/></svg>
<svg style="left:1815.5px;top:246.5px;" width="15" height="15" viewBox="0 0 15 15"><g fill="none" stroke="#cfd0d3" stroke-width="1.300"><circle cx="6.300" cy="6.300" r="4.300"/><path d="M9.500 9.500l4 4"/></g></svg>
<svg style="left:1837.5px;top:246.5px;" width="16" height="16" viewBox="0 0 16 16"><path d="M13 5.200A6 6 0 1 0 14 9.600" fill="none" stroke="#cfd0d3" stroke-width="1.300"/><path d="M13.800 2v4h-4z" fill="#cfd0d3"/></svg>
<div style="left:1713px;top:273.3px;width:141px;height:1px;background:#414247"></div>
<span class="t" style="left:1726.90px;top:285.80px;font-size:14px;color:#ffffff;letter-spacing:-0.600px;font-weight:500;">维度</span>
<span class="t" style="left:1740.40px;top:321.75px;font-size:10.5px;color:#3f7bff;letter-spacing:-0.322px;">Str.</span>
<span class="t" style="left:1760.70px;top:319.30px;font-size:14px;color:#d6d7da;letter-spacing:-0.468px;">order_id</span>
<svg style="left:1727.5px;top:354.5px;" width="10" height="8" viewBox="0 0 10 8"><path d="M0.800 1h8L4.800 6.600z" fill="#a9aaaf"/></svg>
<svg style="left:1740px;top:351px;" width="16" height="16" viewBox="0 0 16 16"><g fill="none" stroke="#3f7bff" stroke-width="1.200"><rect x="5.300" y="1.200" width="5" height="4"/><rect x="1" y="10.400" width="4" height="3.800"/><rect x="6" y="10.400" width="4" height="3.800"/><rect x="11" y="10.400" width="4" height="3.800"/><path d="M7.800 5.200v2.600M3 10.400V7.800h10v2.600M8 7.800v2.600"/></g></svg>
<span class="t" style="left:1760.70px;top:351.40px;font-size:14px;color:#d6d7da;letter-spacing:-0.411px;">report_date</span>
<div class="clip" style="left:1713px;top:274px;width:141px;height:341px">
<svg style="left:36.5px;top:109.60000000000002px;" width="15" height="15" viewBox="0 0 15 15"><g fill="none" stroke="#3f7bff" stroke-width="1.200"><rect x="1.400" y="2.400" width="12" height="11"/><path d="M4.400 0.600v1.800M10.400 0.600v1.800"/></g></svg>
<span class="t" style="left:41.16px;top:113.35px;font-size:8.5px;color:#3f7bff;font-weight:500;">Y</span>
<span class="t" style="left:57.00px;top:110.10px;font-size:14px;color:#d6d7da;letter-spacing:-0.389px;">report_date(ye</span>
<svg style="left:36.5px;top:142.10000000000002px;" width="15" height="15" viewBox="0 0 15 15"><g fill="none" stroke="#3f7bff" stroke-width="1.200"><rect x="1.400" y="2.400" width="12" height="11"/><path d="M4.400 0.600v1.800M10.400 0.600v1.800"/></g></svg>
<span class="t" style="left:40.69px;top:145.85px;font-size:8.5px;color:#3f7bff;font-weight:500;">Q</span>
<span class="t" style="left:57.00px;top:142.60px;font-size:14px;color:#d6d7da;letter-spacing:-0.450px;">report_date(qu</span>
<svg style="left:36.5px;top:174.7px;" width="15" height="15" viewBox="0 0 15 15"><g fill="none" stroke="#3f7bff" stroke-width="1.200"><rect x="1.400" y="2.400" width="12" height="11"/><path d="M4.400 0.600v1.800M10.400 0.600v1.800"/></g></svg>
<span class="t" style="left:40.45px;top:178.45px;font-size:8.5px;color:#3f7bff;font-weight:500;">M</span>
<span class="t" style="left:57.00px;top:175.20px;font-size:14px;color:#d6d7da;letter-spacing:-0.748px;">report_date(mo</span>
<svg style="left:36.5px;top:206.8px;" width="15" height="15" viewBox="0 0 15 15"><g fill="none" stroke="#3f7bff" stroke-width="1.200"><rect x="1.400" y="2.400" width="12" height="11"/><path d="M4.400 0.600v1.800M10.400 0.600v1.800"/></g></svg>
<span class="t" style="left:39.98px;top:210.55px;font-size:8.5px;color:#3f7bff;font-weight:500;">W</span>
<span class="t" style="left:57.00px;top:207.30px;font-size:14px;color:#d6d7da;letter-spacing:-0.629px;">report_date(we</span>
<svg style="left:36.5px;top:239.29999999999995px;" width="15" height="15" viewBox="0 0 15 15"><g fill="none" stroke="#3f7bff" stroke-width="1.200"><rect x="1.400" y="2.400" width="12" height="11"/><path d="M4.400 0.600v1.800M10.400 0.600v1.800"/></g></svg>
<span class="t" style="left:40.93px;top:243.05px;font-size:8.5px;color:#3f7bff;font-weight:500;">D</span>
<span class="t" style="left:57.00px;top:239.80px;font-size:14px;color:#d6d7da;letter-spacing:-0.450px;">report_date(da</span>
<svg style="left:36.5px;top:271.79999999999995px;" width="15" height="15" viewBox="0 0 15 15"><circle cx="7.300" cy="7.800" r="6" fill="none" stroke="#3f7bff" stroke-width="1.200"/></svg>
<span class="t" style="left:40.93px;top:275.55px;font-size:8.5px;color:#3f7bff;font-weight:500;">H</span>
<span class="t" style="left:57.00px;top:272.30px;font-size:14px;color:#d6d7da;letter-spacing:-0.526px;">report_date(ho</span>
<svg style="left:36.5px;top:303.9px;" width="15" height="15" viewBox="0 0 15 15"><circle cx="7.300" cy="7.800" r="6" fill="none" stroke="#3f7bff" stroke-width="1.200"/></svg>
<span class="t" style="left:40.45px;top:307.65px;font-size:8.5px;color:#3f7bff;font-weight:500;">M</span>
<span class="t" style="left:57.00px;top:304.40px;font-size:14px;color:#d6d7da;letter-spacing:-0.465px;">report_date(mi</span>
<svg style="left:36.5px;top:336.0px;" width="15" height="15" viewBox="0 0 15 15"><circle cx="7.300" cy="7.800" r="6" fill="none" stroke="#3f7bff" stroke-width="1.200"/></svg>
<span class="t" style="left:41.16px;top:339.75px;font-size:8.5px;color:#3f7bff;font-weight:500;">S</span>
<span class="t" style="left:57.00px;top:336.50px;font-size:14px;color:#d6d7da;letter-spacing:-0.466px;">report_date(se</span>
</div>
<div style="left:1713px;top:615px;width:141px;height:1px;background:#414247"></div>
<span class="t" style="left:1726.90px;top:627.90px;font-size:14px;color:#ffffff;letter-spacing:-0.600px;font-weight:500;">度量</span>
<span class="t" style="left:1740.90px;top:662.05px;font-size:12.5px;color:#2fb765;">№</span>
<span class="t" style="left:1761.20px;top:661.30px;font-size:14px;color:#d6d7da;letter-spacing:-0.414px;">order_amt</span>
<span class="t" style="left:1740.90px;top:694.25px;font-size:12.5px;color:#2fb765;">№</span>
<span class="t" style="left:1761.20px;top:693.50px;font-size:14px;color:#d6d7da;letter-spacing:-0.358px;">back_point</span>
<span class="t" style="left:1740.90px;top:727.25px;font-size:12.5px;color:#2fb765;">№</span>
<span class="t" style="left:1761.20px;top:726.50px;font-size:14px;color:#d6d7da;letter-spacing:-0.306px;">profit_amt</span>
<span class="t" style="left:1740.90px;top:758.95px;font-size:12.5px;color:#2fb765;">№</span>
<span class="t" style="left:1761.20px;top:758.20px;font-size:14px;color:#d6d7da;letter-spacing:-0.190px;">price</span>
<span class="t" style="left:1740.90px;top:791.55px;font-size:12.5px;color:#2fb765;">№</span>
<span class="t" style="left:1761.20px;top:790.80px;font-size:14px;color:#d6d7da;letter-spacing:-0.319px;">shipping_cost</span>
<div style="left:1848.5px;top:888px;width:40px;height:40px;border-radius:50%;background:#4484fb;box-shadow:0 7px 18px 2px rgba(60,110,235,0.30)"></div>
</body></html>
